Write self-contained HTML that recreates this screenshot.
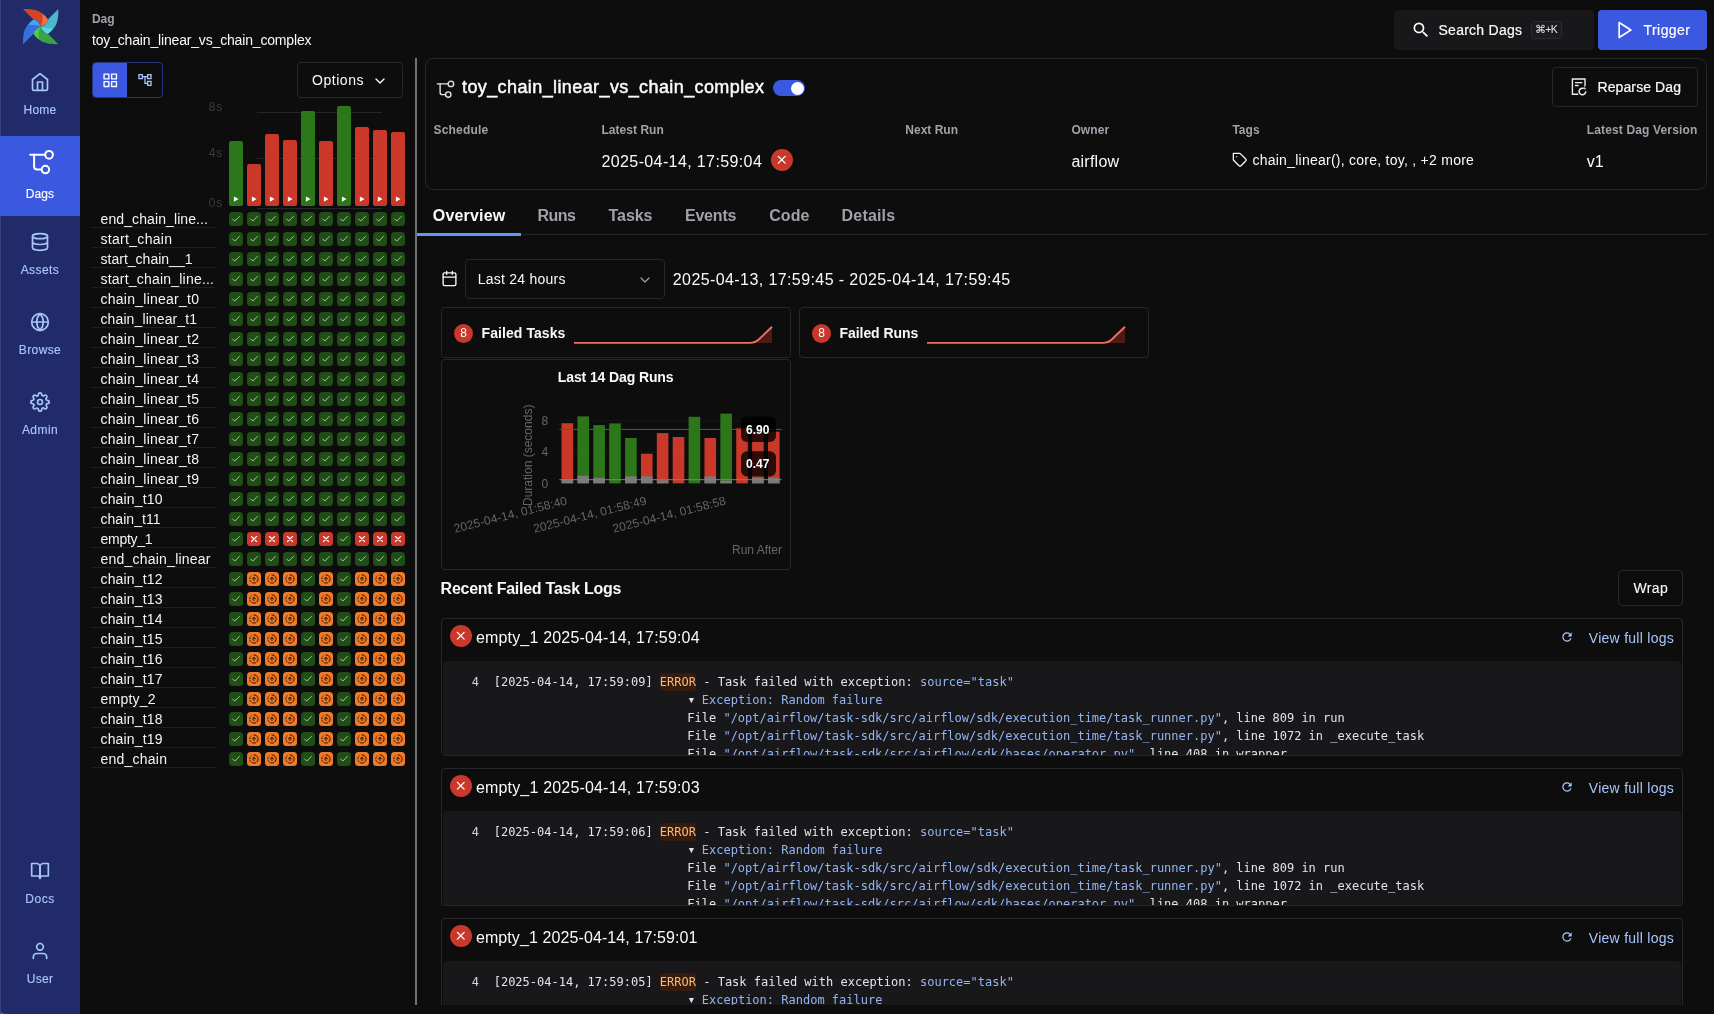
<!DOCTYPE html>
<html lang="en">
<head>
<meta charset="utf-8">
<title>toy_chain_linear_vs_chain_complex - Airflow</title>
<style>

*{box-sizing:border-box;margin:0;padding:0}
html,body{width:1714px;height:1014px;overflow:hidden;background:#0d0d0d}
body{position:relative;will-change:transform;font-family:"Liberation Sans",sans-serif;color:#fafafa;font-size:14px;line-height:20px;-webkit-font-smoothing:antialiased}
.abs{position:absolute}
svg{display:block}
span{white-space:nowrap}
/* sidebar */
#nav{position:absolute;left:0;top:0;width:80px;height:1014px;background:#212b69;border-bottom-left-radius:5px}
#corner{position:absolute;left:0;top:1004px;width:10px;height:10px;background:#6b6a4a}
#nav .edge{position:absolute;left:0;top:0;width:1px;height:1014px;background:#3a4279}
.ni{position:absolute;left:0;width:80px;height:80px;color:#a9c6fb;text-align:center}
.ni.on{background:#3b58e0;color:#fff}
.ni.on .lb{top:48px}
.ni svg{position:absolute;left:30px;top:16px}
.ni .lb{-webkit-text-stroke:.15px currentColor;position:absolute;left:0;width:80px;top:44px;font-size:12px;line-height:20px;text-align:center;display:block}
/* top bar */
.k{color:#a1a1aa}
.btn{position:absolute;border-radius:4px;display:block}
.card{position:absolute;border:1px solid #27272a;border-radius:8px}
.lbl{position:absolute;font-size:12px;line-height:16px;font-weight:bold;color:#a1a1aa}
.tab{position:absolute;top:206px;font-size:16px;line-height:20px;font-weight:bold;color:#a1a1aa}
/* grid */
.tn{position:absolute;left:92px;width:123px;height:20px;border-bottom:1px solid #1f1f22;font-size:14px;line-height:22px;padding-left:8.5px;color:#f4f4f5}
.c{position:absolute;width:14px;height:14px;border-radius:3.5px}
.c.s{background:#1f4e16}
.c.f{background:#c93a2b}
.c.u{background:#ee7f22}
.c svg{position:absolute;left:2px;top:2px}
/* logs */
.lc{position:absolute;left:441px;width:1242px;border:1px solid #27272a;border-radius:4px;overflow:hidden}
.lc .code{position:absolute;left:.6px;top:42px;width:1238.6px;height:94px;background:#18181b;border-radius:4px 4px 0 0;overflow:hidden}
.mono{font-family:"DejaVu Sans Mono","Liberation Mono",monospace;font-size:12px;line-height:18px;white-space:pre;position:absolute;color:#e4e4e7}
.mono .b{color:#93b4f3}
.mono .e{color:#fdba74;background:#371b0c;border-radius:3px;padding:1.75px 0 2.75px}

</style>
</head>
<body>
<div id="corner"></div><nav id="nav"><div class="edge"></div><svg class="abs" style="left:20px;top:6px" width="42" height="42" viewBox="-21 -21 42 42" stroke="none" fill="none"><g transform="translate(-0.3,-0.4)"><g transform="rotate(0)"><path d="M-17.7,-17.6 C-11,-17.8 -4,-17.5 1,-13.5 C4,-11 6,-9 7.4,-6.8 C6.5,-4 4,-1.5 0,0 C-0.5,-3 -3,-6.5 -7.7,-7.7 Z" fill="#d04526"/><path d="M1.8,-12.8 C4,-11 6,-9 7.4,-6.8 C6.5,-4 4,-1.5 0,0 C1.6,-3 2.3,-8 1.8,-12.8 Z" fill="#ee7148"/></g><g transform="rotate(90)"><path d="M-17.7,-17.6 C-11,-17.8 -4,-17.5 1,-13.5 C4,-11 6,-9 7.4,-6.8 C6.5,-4 4,-1.5 0,0 C-0.5,-3 -3,-6.5 -7.7,-7.7 Z" fill="#4bb8c6"/><path d="M1.8,-12.8 C4,-11 6,-9 7.4,-6.8 C6.5,-4 4,-1.5 0,0 C1.6,-3 2.3,-8 1.8,-12.8 Z" fill="#56d6e6"/></g><g transform="rotate(180)"><path d="M-17.7,-17.6 C-11,-17.8 -4,-17.5 1,-13.5 C4,-11 6,-9 7.4,-6.8 C6.5,-4 4,-1.5 0,0 C-0.5,-3 -3,-6.5 -7.7,-7.7 Z" fill="#3da243"/><path d="M1.8,-12.8 C4,-11 6,-9 7.4,-6.8 C6.5,-4 4,-1.5 0,0 C1.6,-3 2.3,-8 1.8,-12.8 Z" fill="#4fc556"/></g><g transform="rotate(270)"><path d="M-17.7,-17.6 C-11,-17.8 -4,-17.5 1,-13.5 C4,-11 6,-9 7.4,-6.8 C6.5,-4 4,-1.5 0,0 C-0.5,-3 -3,-6.5 -7.7,-7.7 Z" fill="#386fe0"/><path d="M1.8,-12.8 C4,-11 6,-9 7.4,-6.8 C6.5,-4 4,-1.5 0,0 C1.6,-3 2.3,-8 1.8,-12.8 Z" fill="#43a3f3"/></g></g></svg><a class="ni" style="top:56px"><svg width="20" height="20" viewBox="0 0 24 24" fill="none" stroke="currentColor" stroke-width="2" stroke-linecap="round" stroke-linejoin="round"><path d="M3 9l9-7 9 7v11a2 2 0 0 1-2 2H5a2 2 0 0 1-2-2z"/><polyline points="9 22 9 12 15 12 15 22"/></svg><span class="lb" style="letter-spacing:0.195px;">Home</span></a><a class="ni on" style="top:136px"><svg width="28" height="28" viewBox="0 0 28 28" fill="none" stroke="currentColor" stroke-width="2" stroke-linecap="round" stroke-linejoin="round" style="left:27px;top:12px"><path d="M3.2 6.8H18.2"/><circle cx="22.05" cy="6.8" r="3.85"/><path d="M7.1 6.8V18.6a3 3 0 0 0 3 3H14.6"/><circle cx="18.4" cy="21.6" r="3.75"/></svg><span class="lb" style="letter-spacing:0.061px;">Dags</span></a><a class="ni" style="top:216px"><svg width="20" height="20" viewBox="0 0 24 24" fill="none" stroke="currentColor" stroke-width="2" stroke-linecap="round" stroke-linejoin="round"><ellipse cx="12" cy="5" rx="9" ry="3"/><path d="M21 12c0 1.66-4 3-9 3s-9-1.34-9-3"/><path d="M3 5v14c0 1.66 4 3 9 3s9-1.34 9-3V5"/></svg><span class="lb" style="letter-spacing:0.437px;">Assets</span></a><a class="ni" style="top:296px"><svg width="20" height="20" viewBox="0 0 24 24" fill="none" stroke="currentColor" stroke-width="2" stroke-linecap="round" stroke-linejoin="round"><circle cx="12" cy="12" r="10"/><line x1="2" y1="12" x2="22" y2="12"/><path d="M12 2a15.3 15.3 0 0 1 4 10 15.3 15.3 0 0 1-4 10 15.3 15.3 0 0 1-4-10 15.3 15.3 0 0 1 4-10z"/></svg><span class="lb" style="letter-spacing:0.397px;">Browse</span></a><a class="ni" style="top:376px"><svg width="20" height="20" viewBox="0 0 24 24" fill="none" stroke="currentColor" stroke-width="2" stroke-linecap="round" stroke-linejoin="round"><circle cx="12" cy="12" r="3"/><path d="M19.4 15a1.65 1.65 0 0 0 .33 1.82l.06.06a2 2 0 0 1 0 2.83 2 2 0 0 1-2.83 0l-.06-.06a1.65 1.65 0 0 0-1.82-.33 1.65 1.65 0 0 0-1 1.51V21a2 2 0 0 1-2 2 2 2 0 0 1-2-2v-.09A1.65 1.65 0 0 0 9 19.4a1.65 1.65 0 0 0-1.82.33l-.06.06a2 2 0 0 1-2.83 0 2 2 0 0 1 0-2.83l.06-.06a1.65 1.65 0 0 0 .33-1.82 1.65 1.65 0 0 0-1.51-1H3a2 2 0 0 1-2-2 2 2 0 0 1 2-2h.09A1.65 1.65 0 0 0 4.6 9a1.65 1.65 0 0 0-.33-1.82l-.06-.06a2 2 0 0 1 0-2.83 2 2 0 0 1 2.83 0l.06.06a1.65 1.65 0 0 0 1.82.33H9a1.65 1.65 0 0 0 1-1.51V3a2 2 0 0 1 2-2 2 2 0 0 1 2 2v.09a1.65 1.65 0 0 0 1 1.51 1.65 1.65 0 0 0 1.82-.33l.06-.06a2 2 0 0 1 2.83 0 2 2 0 0 1 0 2.83l-.06.06a1.65 1.65 0 0 0-.33 1.82V9a1.65 1.65 0 0 0 1.51 1H21a2 2 0 0 1 2 2 2 2 0 0 1-2 2h-.09a1.65 1.65 0 0 0-1.51 1z"/></svg><span class="lb" style="letter-spacing:0.446px;">Admin</span></a><a class="ni" style="top:845px"><svg width="20" height="20" viewBox="0 0 24 24" fill="none" stroke="currentColor" stroke-width="2" stroke-linecap="round" stroke-linejoin="round"><path d="M2 3h6a4 4 0 0 1 4 4v14a3 3 0 0 0-3-3H2z"/><path d="M22 3h-6a4 4 0 0 0-4 4v14a3 3 0 0 1 3-3h7z"/></svg><span class="lb" style="letter-spacing:0.519px;">Docs</span></a><a class="ni" style="top:925px"><svg width="20" height="20" viewBox="0 0 24 24" fill="none" stroke="currentColor" stroke-width="2" stroke-linecap="round" stroke-linejoin="round"><path d="M20 21v-2a4 4 0 0 0-4-4H8a4 4 0 0 0-4 4v2"/><circle cx="12" cy="7" r="4"/></svg><span class="lb" style="letter-spacing:0.352px;">User</span></a></nav>
<div class="abs" style="left:92px;top:11px;font-size:12px;line-height:16px;font-weight:bold;color:#a1a1aa"><span style="letter-spacing:-0.086px;">Dag</span></div><div class="abs" style="left:92px;top:30px;font-size:14px;line-height:20px"><span style="letter-spacing:-0.169px;">toy_chain_linear_vs_chain_complex</span></div><div class="btn" style="left:1394px;top:10px;width:200px;height:40px;background:#18181b"><svg class="abs" style="left:17px;top:10px" width="20" height="20" viewBox="0 0 24 24" fill="#fafafa"><path d="M15.5 14h-.79l-.28-.27A6.471 6.471 0 0 0 16 9.500 6.500 6.500 0 1 0 9.500 16c1.610 0 3.090-.590 4.230-1.570l.27.280v.790l5 4.990L20.490 19l-4.990-5zm-6 0C7.010 14 5 11.990 5 9.500S7.010 5 9.500 5 14 7.010 14 9.500 11.990 14 9.500 14z"/></svg><div class="abs" style="left:44.5px;top:10px;font-size:14px;line-height:20px;-webkit-text-stroke:0.2px #fafafa"><span style="letter-spacing:0.256px;">Search Dags</span></div><div class="abs" style="left:136.5px;top:11px;width:31px;height:17.5px;border:1px solid #2b2b2f;border-radius:4px;background:#1c1c1f;font-size:10.5px;line-height:15px;color:#e4e4e7;text-align:center"><span style="letter-spacing:-0.455px;">&#8984;+K</span></div></div><div class="btn" style="left:1598px;top:10px;width:109px;height:40px;background:#3b58e0"><svg width="20" height="20" viewBox="0 0 24 24" fill="none" stroke="#fff" stroke-width="2" stroke-linecap="round" stroke-linejoin="round" style="position:absolute;left:16.5px;top:10px"><polygon points="5 3 19 12 5 21 5 3"/></svg><div class="abs" style="left:45.5px;top:10px;font-size:14px;line-height:20px;color:#fff;-webkit-text-stroke:0.2px #fff"><span style="letter-spacing:0.445px;">Trigger</span></div></div>
<div class="abs" style="left:92px;top:62px;width:71px;height:36px;border:1px solid #26347f;border-radius:4px;overflow:hidden"><div class="abs" style="left:-1px;top:-1px;width:34.8px;height:36px;background:#3b58e0"></div><svg width="16.5" height="16.5" viewBox="0 0 24 24" fill="none" stroke="#fff" stroke-width="2" stroke-linecap="round" stroke-linejoin="round" style="position:absolute;left:8.5px;top:9.3px"><rect x="3" y="3" width="7" height="7"/><rect x="14" y="3" width="7" height="7"/><rect x="14" y="14" width="7" height="7"/><rect x="3" y="14" width="7" height="7"/></svg><svg class="abs" style="left:44px;top:9px" width="16" height="16" viewBox="0 0 24 24" fill="#a9c6fb"><path d="M22 11V3h-7v3H9V3H2v8h7V8h2v10h4v3h7v-8h-7v3h-2V8h2v3h7zM7 9H4V5h3v4zm10 6h3v4h-3v-4zm0-10h3v4h-3V5z"/></svg></div><div class="abs" style="left:297px;top:62px;width:106px;height:36px;border:1px solid #27272a;border-radius:4px"><div class="abs" style="left:14px;top:7px;font-size:14px;line-height:20px;"><span style="letter-spacing:0.542px;">Options</span></div><svg width="16" height="16" viewBox="0 0 24 24" fill="none" stroke="#fafafa" stroke-width="2" stroke-linecap="round" stroke-linejoin="round" style="position:absolute;left:74px;top:9.5px"><polyline points="6 9 12 15 18 9"/></svg></div><div class="abs" style="left:208.8px;top:98.7px;font-size:12px;line-height:16px;color:#3c3c42"><span style="letter-spacing:0.812px;">8s</span></div><div class="abs" style="left:208.8px;top:145.0px;font-size:12px;line-height:16px;color:#3c3c42"><span style="letter-spacing:0.812px;">4s</span></div><div class="abs" style="left:208.8px;top:195.0px;font-size:12px;line-height:16px;color:#3c3c42"><span style="letter-spacing:0.812px;">0s</span></div><div class="abs" style="left:257px;top:112px;width:125px;height:1px;background:#26262a"></div><div class="abs" style="left:257px;top:158px;width:125px;height:1px;background:#26262a"></div><div class="abs" style="left:257px;top:208px;width:125px;height:1px;background:#26262a"></div><svg class="abs" style="left:229px;top:100px" width="180" height="108" viewBox="0 0 180 108" stroke="none"><rect x="0" y="41" width="14" height="65" rx="2" fill="#2d771b"/><path d="M4.9 96.4v5.4l4.7-2.7z" fill="#fff"/><rect x="18" y="64" width="14" height="42" rx="2" fill="#c93829"/><path d="M22.9 96.4v5.4l4.7-2.7z" fill="#fff"/><rect x="36" y="34" width="14" height="72" rx="2" fill="#c93829"/><path d="M40.9 96.4v5.4l4.7-2.7z" fill="#fff"/><rect x="54" y="40" width="14" height="66" rx="2" fill="#c93829"/><path d="M58.9 96.4v5.4l4.7-2.7z" fill="#fff"/><rect x="72" y="11" width="14" height="95" rx="2" fill="#2d771b"/><path d="M76.9 96.4v5.4l4.7-2.7z" fill="#fff"/><rect x="90" y="41" width="14" height="65" rx="2" fill="#c93829"/><path d="M94.9 96.4v5.4l4.7-2.7z" fill="#fff"/><rect x="108" y="6" width="14" height="100" rx="2" fill="#2d771b"/><path d="M112.9 96.4v5.4l4.7-2.7z" fill="#fff"/><rect x="126" y="27" width="14" height="79" rx="2" fill="#c93829"/><path d="M130.9 96.4v5.4l4.7-2.7z" fill="#fff"/><rect x="144" y="30" width="14" height="76" rx="2" fill="#c93829"/><path d="M148.9 96.4v5.4l4.7-2.7z" fill="#fff"/><rect x="162" y="32" width="14" height="74" rx="2" fill="#c93829"/><path d="M166.9 96.4v5.4l4.7-2.7z" fill="#fff"/></svg><div class="tn" style="top:208px"><span style="letter-spacing:0.102px;">end_chain_line...</span></div><div class="tn" style="top:228px"><span style="letter-spacing:0.302px;">start_chain</span></div><div class="tn" style="top:248px"><span style="letter-spacing:0.012px;">start_chain__1</span></div><div class="tn" style="top:268px"><span style="letter-spacing:0.209px;">start_chain_line...</span></div><div class="tn" style="top:288px"><span style="letter-spacing:0.252px;">chain_linear_t0</span></div><div class="tn" style="top:308px"><span style="letter-spacing:0.109px;">chain_linear_t1</span></div><div class="tn" style="top:328px"><span style="letter-spacing:0.252px;">chain_linear_t2</span></div><div class="tn" style="top:348px"><span style="letter-spacing:0.252px;">chain_linear_t3</span></div><div class="tn" style="top:368px"><span style="letter-spacing:0.252px;">chain_linear_t4</span></div><div class="tn" style="top:388px"><span style="letter-spacing:0.252px;">chain_linear_t5</span></div><div class="tn" style="top:408px"><span style="letter-spacing:0.252px;">chain_linear_t6</span></div><div class="tn" style="top:428px"><span style="letter-spacing:0.252px;">chain_linear_t7</span></div><div class="tn" style="top:448px"><span style="letter-spacing:0.252px;">chain_linear_t8</span></div><div class="tn" style="top:468px"><span style="letter-spacing:0.252px;">chain_linear_t9</span></div><div class="tn" style="top:488px"><span style="letter-spacing:0.160px;">chain_t10</span></div><div class="tn" style="top:508px"><span style="letter-spacing:0.039px;">chain_t11</span></div><div class="tn" style="top:528px"><span style="letter-spacing:-0.284px;">empty_1</span></div><div class="tn" style="top:548px"><span style="letter-spacing:0.224px;">end_chain_linear</span></div><div class="tn" style="top:568px"><span style="letter-spacing:0.160px;">chain_t12</span></div><div class="tn" style="top:588px"><span style="letter-spacing:0.160px;">chain_t13</span></div><div class="tn" style="top:608px"><span style="letter-spacing:0.160px;">chain_t14</span></div><div class="tn" style="top:628px"><span style="letter-spacing:0.160px;">chain_t15</span></div><div class="tn" style="top:648px"><span style="letter-spacing:0.160px;">chain_t16</span></div><div class="tn" style="top:668px"><span style="letter-spacing:0.160px;">chain_t17</span></div><div class="tn" style="top:688px"><span style="letter-spacing:0.216px;">empty_2</span></div><div class="tn" style="top:708px"><span style="letter-spacing:0.160px;">chain_t18</span></div><div class="tn" style="top:728px"><span style="letter-spacing:0.160px;">chain_t19</span></div><div class="tn" style="top:748px"><span style="letter-spacing:0.234px;">end_chain</span></div><svg class="abs" style="left:229px;top:208px" width="180" height="560" viewBox="0 0 180 560" fill="none" stroke-linecap="round" stroke-linejoin="round"><rect x="0" y="4" width="14" height="14" rx="3.5" fill="#1f4e16"/><path d="M3.67 11.00l2.08 2.08 4.59-4.58" stroke="#e4efe2" stroke-opacity=".8" stroke-width=".9"/><rect x="18" y="4" width="14" height="14" rx="3.5" fill="#1f4e16"/><path d="M21.67 11.00l2.08 2.08 4.59-4.58" stroke="#e4efe2" stroke-opacity=".8" stroke-width=".9"/><rect x="36" y="4" width="14" height="14" rx="3.5" fill="#1f4e16"/><path d="M39.67 11.00l2.08 2.08 4.59-4.58" stroke="#e4efe2" stroke-opacity=".8" stroke-width=".9"/><rect x="54" y="4" width="14" height="14" rx="3.5" fill="#1f4e16"/><path d="M57.67 11.00l2.08 2.08 4.59-4.58" stroke="#e4efe2" stroke-opacity=".8" stroke-width=".9"/><rect x="72" y="4" width="14" height="14" rx="3.5" fill="#1f4e16"/><path d="M75.67 11.00l2.08 2.08 4.59-4.58" stroke="#e4efe2" stroke-opacity=".8" stroke-width=".9"/><rect x="90" y="4" width="14" height="14" rx="3.5" fill="#1f4e16"/><path d="M93.67 11.00l2.08 2.08 4.59-4.58" stroke="#e4efe2" stroke-opacity=".8" stroke-width=".9"/><rect x="108" y="4" width="14" height="14" rx="3.5" fill="#1f4e16"/><path d="M111.67 11.00l2.08 2.08 4.59-4.58" stroke="#e4efe2" stroke-opacity=".8" stroke-width=".9"/><rect x="126" y="4" width="14" height="14" rx="3.5" fill="#1f4e16"/><path d="M129.67 11.00l2.08 2.08 4.59-4.58" stroke="#e4efe2" stroke-opacity=".8" stroke-width=".9"/><rect x="144" y="4" width="14" height="14" rx="3.5" fill="#1f4e16"/><path d="M147.67 11.00l2.08 2.08 4.59-4.58" stroke="#e4efe2" stroke-opacity=".8" stroke-width=".9"/><rect x="162" y="4" width="14" height="14" rx="3.5" fill="#1f4e16"/><path d="M165.67 11.00l2.08 2.08 4.59-4.58" stroke="#e4efe2" stroke-opacity=".8" stroke-width=".9"/><rect x="0" y="24" width="14" height="14" rx="3.5" fill="#1f4e16"/><path d="M3.67 31.00l2.08 2.08 4.59-4.58" stroke="#e4efe2" stroke-opacity=".8" stroke-width=".9"/><rect x="18" y="24" width="14" height="14" rx="3.5" fill="#1f4e16"/><path d="M21.67 31.00l2.08 2.08 4.59-4.58" stroke="#e4efe2" stroke-opacity=".8" stroke-width=".9"/><rect x="36" y="24" width="14" height="14" rx="3.5" fill="#1f4e16"/><path d="M39.67 31.00l2.08 2.08 4.59-4.58" stroke="#e4efe2" stroke-opacity=".8" stroke-width=".9"/><rect x="54" y="24" width="14" height="14" rx="3.5" fill="#1f4e16"/><path d="M57.67 31.00l2.08 2.08 4.59-4.58" stroke="#e4efe2" stroke-opacity=".8" stroke-width=".9"/><rect x="72" y="24" width="14" height="14" rx="3.5" fill="#1f4e16"/><path d="M75.67 31.00l2.08 2.08 4.59-4.58" stroke="#e4efe2" stroke-opacity=".8" stroke-width=".9"/><rect x="90" y="24" width="14" height="14" rx="3.5" fill="#1f4e16"/><path d="M93.67 31.00l2.08 2.08 4.59-4.58" stroke="#e4efe2" stroke-opacity=".8" stroke-width=".9"/><rect x="108" y="24" width="14" height="14" rx="3.5" fill="#1f4e16"/><path d="M111.67 31.00l2.08 2.08 4.59-4.58" stroke="#e4efe2" stroke-opacity=".8" stroke-width=".9"/><rect x="126" y="24" width="14" height="14" rx="3.5" fill="#1f4e16"/><path d="M129.67 31.00l2.08 2.08 4.59-4.58" stroke="#e4efe2" stroke-opacity=".8" stroke-width=".9"/><rect x="144" y="24" width="14" height="14" rx="3.5" fill="#1f4e16"/><path d="M147.67 31.00l2.08 2.08 4.59-4.58" stroke="#e4efe2" stroke-opacity=".8" stroke-width=".9"/><rect x="162" y="24" width="14" height="14" rx="3.5" fill="#1f4e16"/><path d="M165.67 31.00l2.08 2.08 4.59-4.58" stroke="#e4efe2" stroke-opacity=".8" stroke-width=".9"/><rect x="0" y="44" width="14" height="14" rx="3.5" fill="#1f4e16"/><path d="M3.67 51.00l2.08 2.08 4.59-4.58" stroke="#e4efe2" stroke-opacity=".8" stroke-width=".9"/><rect x="18" y="44" width="14" height="14" rx="3.5" fill="#1f4e16"/><path d="M21.67 51.00l2.08 2.08 4.59-4.58" stroke="#e4efe2" stroke-opacity=".8" stroke-width=".9"/><rect x="36" y="44" width="14" height="14" rx="3.5" fill="#1f4e16"/><path d="M39.67 51.00l2.08 2.08 4.59-4.58" stroke="#e4efe2" stroke-opacity=".8" stroke-width=".9"/><rect x="54" y="44" width="14" height="14" rx="3.5" fill="#1f4e16"/><path d="M57.67 51.00l2.08 2.08 4.59-4.58" stroke="#e4efe2" stroke-opacity=".8" stroke-width=".9"/><rect x="72" y="44" width="14" height="14" rx="3.5" fill="#1f4e16"/><path d="M75.67 51.00l2.08 2.08 4.59-4.58" stroke="#e4efe2" stroke-opacity=".8" stroke-width=".9"/><rect x="90" y="44" width="14" height="14" rx="3.5" fill="#1f4e16"/><path d="M93.67 51.00l2.08 2.08 4.59-4.58" stroke="#e4efe2" stroke-opacity=".8" stroke-width=".9"/><rect x="108" y="44" width="14" height="14" rx="3.5" fill="#1f4e16"/><path d="M111.67 51.00l2.08 2.08 4.59-4.58" stroke="#e4efe2" stroke-opacity=".8" stroke-width=".9"/><rect x="126" y="44" width="14" height="14" rx="3.5" fill="#1f4e16"/><path d="M129.67 51.00l2.08 2.08 4.59-4.58" stroke="#e4efe2" stroke-opacity=".8" stroke-width=".9"/><rect x="144" y="44" width="14" height="14" rx="3.5" fill="#1f4e16"/><path d="M147.67 51.00l2.08 2.08 4.59-4.58" stroke="#e4efe2" stroke-opacity=".8" stroke-width=".9"/><rect x="162" y="44" width="14" height="14" rx="3.5" fill="#1f4e16"/><path d="M165.67 51.00l2.08 2.08 4.59-4.58" stroke="#e4efe2" stroke-opacity=".8" stroke-width=".9"/><rect x="0" y="64" width="14" height="14" rx="3.5" fill="#1f4e16"/><path d="M3.67 71.00l2.08 2.08 4.59-4.58" stroke="#e4efe2" stroke-opacity=".8" stroke-width=".9"/><rect x="18" y="64" width="14" height="14" rx="3.5" fill="#1f4e16"/><path d="M21.67 71.00l2.08 2.08 4.59-4.58" stroke="#e4efe2" stroke-opacity=".8" stroke-width=".9"/><rect x="36" y="64" width="14" height="14" rx="3.5" fill="#1f4e16"/><path d="M39.67 71.00l2.08 2.08 4.59-4.58" stroke="#e4efe2" stroke-opacity=".8" stroke-width=".9"/><rect x="54" y="64" width="14" height="14" rx="3.5" fill="#1f4e16"/><path d="M57.67 71.00l2.08 2.08 4.59-4.58" stroke="#e4efe2" stroke-opacity=".8" stroke-width=".9"/><rect x="72" y="64" width="14" height="14" rx="3.5" fill="#1f4e16"/><path d="M75.67 71.00l2.08 2.08 4.59-4.58" stroke="#e4efe2" stroke-opacity=".8" stroke-width=".9"/><rect x="90" y="64" width="14" height="14" rx="3.5" fill="#1f4e16"/><path d="M93.67 71.00l2.08 2.08 4.59-4.58" stroke="#e4efe2" stroke-opacity=".8" stroke-width=".9"/><rect x="108" y="64" width="14" height="14" rx="3.5" fill="#1f4e16"/><path d="M111.67 71.00l2.08 2.08 4.59-4.58" stroke="#e4efe2" stroke-opacity=".8" stroke-width=".9"/><rect x="126" y="64" width="14" height="14" rx="3.5" fill="#1f4e16"/><path d="M129.67 71.00l2.08 2.08 4.59-4.58" stroke="#e4efe2" stroke-opacity=".8" stroke-width=".9"/><rect x="144" y="64" width="14" height="14" rx="3.5" fill="#1f4e16"/><path d="M147.67 71.00l2.08 2.08 4.59-4.58" stroke="#e4efe2" stroke-opacity=".8" stroke-width=".9"/><rect x="162" y="64" width="14" height="14" rx="3.5" fill="#1f4e16"/><path d="M165.67 71.00l2.08 2.08 4.59-4.58" stroke="#e4efe2" stroke-opacity=".8" stroke-width=".9"/><rect x="0" y="84" width="14" height="14" rx="3.5" fill="#1f4e16"/><path d="M3.67 91.00l2.08 2.08 4.59-4.58" stroke="#e4efe2" stroke-opacity=".8" stroke-width=".9"/><rect x="18" y="84" width="14" height="14" rx="3.5" fill="#1f4e16"/><path d="M21.67 91.00l2.08 2.08 4.59-4.58" stroke="#e4efe2" stroke-opacity=".8" stroke-width=".9"/><rect x="36" y="84" width="14" height="14" rx="3.5" fill="#1f4e16"/><path d="M39.67 91.00l2.08 2.08 4.59-4.58" stroke="#e4efe2" stroke-opacity=".8" stroke-width=".9"/><rect x="54" y="84" width="14" height="14" rx="3.5" fill="#1f4e16"/><path d="M57.67 91.00l2.08 2.08 4.59-4.58" stroke="#e4efe2" stroke-opacity=".8" stroke-width=".9"/><rect x="72" y="84" width="14" height="14" rx="3.5" fill="#1f4e16"/><path d="M75.67 91.00l2.08 2.08 4.59-4.58" stroke="#e4efe2" stroke-opacity=".8" stroke-width=".9"/><rect x="90" y="84" width="14" height="14" rx="3.5" fill="#1f4e16"/><path d="M93.67 91.00l2.08 2.08 4.59-4.58" stroke="#e4efe2" stroke-opacity=".8" stroke-width=".9"/><rect x="108" y="84" width="14" height="14" rx="3.5" fill="#1f4e16"/><path d="M111.67 91.00l2.08 2.08 4.59-4.58" stroke="#e4efe2" stroke-opacity=".8" stroke-width=".9"/><rect x="126" y="84" width="14" height="14" rx="3.5" fill="#1f4e16"/><path d="M129.67 91.00l2.08 2.08 4.59-4.58" stroke="#e4efe2" stroke-opacity=".8" stroke-width=".9"/><rect x="144" y="84" width="14" height="14" rx="3.5" fill="#1f4e16"/><path d="M147.67 91.00l2.08 2.08 4.59-4.58" stroke="#e4efe2" stroke-opacity=".8" stroke-width=".9"/><rect x="162" y="84" width="14" height="14" rx="3.5" fill="#1f4e16"/><path d="M165.67 91.00l2.08 2.08 4.59-4.58" stroke="#e4efe2" stroke-opacity=".8" stroke-width=".9"/><rect x="0" y="104" width="14" height="14" rx="3.5" fill="#1f4e16"/><path d="M3.67 111.00l2.08 2.08 4.59-4.58" stroke="#e4efe2" stroke-opacity=".8" stroke-width=".9"/><rect x="18" y="104" width="14" height="14" rx="3.5" fill="#1f4e16"/><path d="M21.67 111.00l2.08 2.08 4.59-4.58" stroke="#e4efe2" stroke-opacity=".8" stroke-width=".9"/><rect x="36" y="104" width="14" height="14" rx="3.5" fill="#1f4e16"/><path d="M39.67 111.00l2.08 2.08 4.59-4.58" stroke="#e4efe2" stroke-opacity=".8" stroke-width=".9"/><rect x="54" y="104" width="14" height="14" rx="3.5" fill="#1f4e16"/><path d="M57.67 111.00l2.08 2.08 4.59-4.58" stroke="#e4efe2" stroke-opacity=".8" stroke-width=".9"/><rect x="72" y="104" width="14" height="14" rx="3.5" fill="#1f4e16"/><path d="M75.67 111.00l2.08 2.08 4.59-4.58" stroke="#e4efe2" stroke-opacity=".8" stroke-width=".9"/><rect x="90" y="104" width="14" height="14" rx="3.5" fill="#1f4e16"/><path d="M93.67 111.00l2.08 2.08 4.59-4.58" stroke="#e4efe2" stroke-opacity=".8" stroke-width=".9"/><rect x="108" y="104" width="14" height="14" rx="3.5" fill="#1f4e16"/><path d="M111.67 111.00l2.08 2.08 4.59-4.58" stroke="#e4efe2" stroke-opacity=".8" stroke-width=".9"/><rect x="126" y="104" width="14" height="14" rx="3.5" fill="#1f4e16"/><path d="M129.67 111.00l2.08 2.08 4.59-4.58" stroke="#e4efe2" stroke-opacity=".8" stroke-width=".9"/><rect x="144" y="104" width="14" height="14" rx="3.5" fill="#1f4e16"/><path d="M147.67 111.00l2.08 2.08 4.59-4.58" stroke="#e4efe2" stroke-opacity=".8" stroke-width=".9"/><rect x="162" y="104" width="14" height="14" rx="3.5" fill="#1f4e16"/><path d="M165.67 111.00l2.08 2.08 4.59-4.58" stroke="#e4efe2" stroke-opacity=".8" stroke-width=".9"/><rect x="0" y="124" width="14" height="14" rx="3.5" fill="#1f4e16"/><path d="M3.67 131.00l2.08 2.08 4.59-4.58" stroke="#e4efe2" stroke-opacity=".8" stroke-width=".9"/><rect x="18" y="124" width="14" height="14" rx="3.5" fill="#1f4e16"/><path d="M21.67 131.00l2.08 2.08 4.59-4.58" stroke="#e4efe2" stroke-opacity=".8" stroke-width=".9"/><rect x="36" y="124" width="14" height="14" rx="3.5" fill="#1f4e16"/><path d="M39.67 131.00l2.08 2.08 4.59-4.58" stroke="#e4efe2" stroke-opacity=".8" stroke-width=".9"/><rect x="54" y="124" width="14" height="14" rx="3.5" fill="#1f4e16"/><path d="M57.67 131.00l2.08 2.08 4.59-4.58" stroke="#e4efe2" stroke-opacity=".8" stroke-width=".9"/><rect x="72" y="124" width="14" height="14" rx="3.5" fill="#1f4e16"/><path d="M75.67 131.00l2.08 2.08 4.59-4.58" stroke="#e4efe2" stroke-opacity=".8" stroke-width=".9"/><rect x="90" y="124" width="14" height="14" rx="3.5" fill="#1f4e16"/><path d="M93.67 131.00l2.08 2.08 4.59-4.58" stroke="#e4efe2" stroke-opacity=".8" stroke-width=".9"/><rect x="108" y="124" width="14" height="14" rx="3.5" fill="#1f4e16"/><path d="M111.67 131.00l2.08 2.08 4.59-4.58" stroke="#e4efe2" stroke-opacity=".8" stroke-width=".9"/><rect x="126" y="124" width="14" height="14" rx="3.5" fill="#1f4e16"/><path d="M129.67 131.00l2.08 2.08 4.59-4.58" stroke="#e4efe2" stroke-opacity=".8" stroke-width=".9"/><rect x="144" y="124" width="14" height="14" rx="3.5" fill="#1f4e16"/><path d="M147.67 131.00l2.08 2.08 4.59-4.58" stroke="#e4efe2" stroke-opacity=".8" stroke-width=".9"/><rect x="162" y="124" width="14" height="14" rx="3.5" fill="#1f4e16"/><path d="M165.67 131.00l2.08 2.08 4.59-4.58" stroke="#e4efe2" stroke-opacity=".8" stroke-width=".9"/><rect x="0" y="144" width="14" height="14" rx="3.5" fill="#1f4e16"/><path d="M3.67 151.00l2.08 2.08 4.59-4.58" stroke="#e4efe2" stroke-opacity=".8" stroke-width=".9"/><rect x="18" y="144" width="14" height="14" rx="3.5" fill="#1f4e16"/><path d="M21.67 151.00l2.08 2.08 4.59-4.58" stroke="#e4efe2" stroke-opacity=".8" stroke-width=".9"/><rect x="36" y="144" width="14" height="14" rx="3.5" fill="#1f4e16"/><path d="M39.67 151.00l2.08 2.08 4.59-4.58" stroke="#e4efe2" stroke-opacity=".8" stroke-width=".9"/><rect x="54" y="144" width="14" height="14" rx="3.5" fill="#1f4e16"/><path d="M57.67 151.00l2.08 2.08 4.59-4.58" stroke="#e4efe2" stroke-opacity=".8" stroke-width=".9"/><rect x="72" y="144" width="14" height="14" rx="3.5" fill="#1f4e16"/><path d="M75.67 151.00l2.08 2.08 4.59-4.58" stroke="#e4efe2" stroke-opacity=".8" stroke-width=".9"/><rect x="90" y="144" width="14" height="14" rx="3.5" fill="#1f4e16"/><path d="M93.67 151.00l2.08 2.08 4.59-4.58" stroke="#e4efe2" stroke-opacity=".8" stroke-width=".9"/><rect x="108" y="144" width="14" height="14" rx="3.5" fill="#1f4e16"/><path d="M111.67 151.00l2.08 2.08 4.59-4.58" stroke="#e4efe2" stroke-opacity=".8" stroke-width=".9"/><rect x="126" y="144" width="14" height="14" rx="3.5" fill="#1f4e16"/><path d="M129.67 151.00l2.08 2.08 4.59-4.58" stroke="#e4efe2" stroke-opacity=".8" stroke-width=".9"/><rect x="144" y="144" width="14" height="14" rx="3.5" fill="#1f4e16"/><path d="M147.67 151.00l2.08 2.08 4.59-4.58" stroke="#e4efe2" stroke-opacity=".8" stroke-width=".9"/><rect x="162" y="144" width="14" height="14" rx="3.5" fill="#1f4e16"/><path d="M165.67 151.00l2.08 2.08 4.59-4.58" stroke="#e4efe2" stroke-opacity=".8" stroke-width=".9"/><rect x="0" y="164" width="14" height="14" rx="3.5" fill="#1f4e16"/><path d="M3.67 171.00l2.08 2.08 4.59-4.58" stroke="#e4efe2" stroke-opacity=".8" stroke-width=".9"/><rect x="18" y="164" width="14" height="14" rx="3.5" fill="#1f4e16"/><path d="M21.67 171.00l2.08 2.08 4.59-4.58" stroke="#e4efe2" stroke-opacity=".8" stroke-width=".9"/><rect x="36" y="164" width="14" height="14" rx="3.5" fill="#1f4e16"/><path d="M39.67 171.00l2.08 2.08 4.59-4.58" stroke="#e4efe2" stroke-opacity=".8" stroke-width=".9"/><rect x="54" y="164" width="14" height="14" rx="3.5" fill="#1f4e16"/><path d="M57.67 171.00l2.08 2.08 4.59-4.58" stroke="#e4efe2" stroke-opacity=".8" stroke-width=".9"/><rect x="72" y="164" width="14" height="14" rx="3.5" fill="#1f4e16"/><path d="M75.67 171.00l2.08 2.08 4.59-4.58" stroke="#e4efe2" stroke-opacity=".8" stroke-width=".9"/><rect x="90" y="164" width="14" height="14" rx="3.5" fill="#1f4e16"/><path d="M93.67 171.00l2.08 2.08 4.59-4.58" stroke="#e4efe2" stroke-opacity=".8" stroke-width=".9"/><rect x="108" y="164" width="14" height="14" rx="3.5" fill="#1f4e16"/><path d="M111.67 171.00l2.08 2.08 4.59-4.58" stroke="#e4efe2" stroke-opacity=".8" stroke-width=".9"/><rect x="126" y="164" width="14" height="14" rx="3.5" fill="#1f4e16"/><path d="M129.67 171.00l2.08 2.08 4.59-4.58" stroke="#e4efe2" stroke-opacity=".8" stroke-width=".9"/><rect x="144" y="164" width="14" height="14" rx="3.5" fill="#1f4e16"/><path d="M147.67 171.00l2.08 2.08 4.59-4.58" stroke="#e4efe2" stroke-opacity=".8" stroke-width=".9"/><rect x="162" y="164" width="14" height="14" rx="3.5" fill="#1f4e16"/><path d="M165.67 171.00l2.08 2.08 4.59-4.58" stroke="#e4efe2" stroke-opacity=".8" stroke-width=".9"/><rect x="0" y="184" width="14" height="14" rx="3.5" fill="#1f4e16"/><path d="M3.67 191.00l2.08 2.08 4.59-4.58" stroke="#e4efe2" stroke-opacity=".8" stroke-width=".9"/><rect x="18" y="184" width="14" height="14" rx="3.5" fill="#1f4e16"/><path d="M21.67 191.00l2.08 2.08 4.59-4.58" stroke="#e4efe2" stroke-opacity=".8" stroke-width=".9"/><rect x="36" y="184" width="14" height="14" rx="3.5" fill="#1f4e16"/><path d="M39.67 191.00l2.08 2.08 4.59-4.58" stroke="#e4efe2" stroke-opacity=".8" stroke-width=".9"/><rect x="54" y="184" width="14" height="14" rx="3.5" fill="#1f4e16"/><path d="M57.67 191.00l2.08 2.08 4.59-4.58" stroke="#e4efe2" stroke-opacity=".8" stroke-width=".9"/><rect x="72" y="184" width="14" height="14" rx="3.5" fill="#1f4e16"/><path d="M75.67 191.00l2.08 2.08 4.59-4.58" stroke="#e4efe2" stroke-opacity=".8" stroke-width=".9"/><rect x="90" y="184" width="14" height="14" rx="3.5" fill="#1f4e16"/><path d="M93.67 191.00l2.08 2.08 4.59-4.58" stroke="#e4efe2" stroke-opacity=".8" stroke-width=".9"/><rect x="108" y="184" width="14" height="14" rx="3.5" fill="#1f4e16"/><path d="M111.67 191.00l2.08 2.08 4.59-4.58" stroke="#e4efe2" stroke-opacity=".8" stroke-width=".9"/><rect x="126" y="184" width="14" height="14" rx="3.5" fill="#1f4e16"/><path d="M129.67 191.00l2.08 2.08 4.59-4.58" stroke="#e4efe2" stroke-opacity=".8" stroke-width=".9"/><rect x="144" y="184" width="14" height="14" rx="3.5" fill="#1f4e16"/><path d="M147.67 191.00l2.08 2.08 4.59-4.58" stroke="#e4efe2" stroke-opacity=".8" stroke-width=".9"/><rect x="162" y="184" width="14" height="14" rx="3.5" fill="#1f4e16"/><path d="M165.67 191.00l2.08 2.08 4.59-4.58" stroke="#e4efe2" stroke-opacity=".8" stroke-width=".9"/><rect x="0" y="204" width="14" height="14" rx="3.5" fill="#1f4e16"/><path d="M3.67 211.00l2.08 2.08 4.59-4.58" stroke="#e4efe2" stroke-opacity=".8" stroke-width=".9"/><rect x="18" y="204" width="14" height="14" rx="3.5" fill="#1f4e16"/><path d="M21.67 211.00l2.08 2.08 4.59-4.58" stroke="#e4efe2" stroke-opacity=".8" stroke-width=".9"/><rect x="36" y="204" width="14" height="14" rx="3.5" fill="#1f4e16"/><path d="M39.67 211.00l2.08 2.08 4.59-4.58" stroke="#e4efe2" stroke-opacity=".8" stroke-width=".9"/><rect x="54" y="204" width="14" height="14" rx="3.5" fill="#1f4e16"/><path d="M57.67 211.00l2.08 2.08 4.59-4.58" stroke="#e4efe2" stroke-opacity=".8" stroke-width=".9"/><rect x="72" y="204" width="14" height="14" rx="3.5" fill="#1f4e16"/><path d="M75.67 211.00l2.08 2.08 4.59-4.58" stroke="#e4efe2" stroke-opacity=".8" stroke-width=".9"/><rect x="90" y="204" width="14" height="14" rx="3.5" fill="#1f4e16"/><path d="M93.67 211.00l2.08 2.08 4.59-4.58" stroke="#e4efe2" stroke-opacity=".8" stroke-width=".9"/><rect x="108" y="204" width="14" height="14" rx="3.5" fill="#1f4e16"/><path d="M111.67 211.00l2.08 2.08 4.59-4.58" stroke="#e4efe2" stroke-opacity=".8" stroke-width=".9"/><rect x="126" y="204" width="14" height="14" rx="3.5" fill="#1f4e16"/><path d="M129.67 211.00l2.08 2.08 4.59-4.58" stroke="#e4efe2" stroke-opacity=".8" stroke-width=".9"/><rect x="144" y="204" width="14" height="14" rx="3.5" fill="#1f4e16"/><path d="M147.67 211.00l2.08 2.08 4.59-4.58" stroke="#e4efe2" stroke-opacity=".8" stroke-width=".9"/><rect x="162" y="204" width="14" height="14" rx="3.5" fill="#1f4e16"/><path d="M165.67 211.00l2.08 2.08 4.59-4.58" stroke="#e4efe2" stroke-opacity=".8" stroke-width=".9"/><rect x="0" y="224" width="14" height="14" rx="3.5" fill="#1f4e16"/><path d="M3.67 231.00l2.08 2.08 4.59-4.58" stroke="#e4efe2" stroke-opacity=".8" stroke-width=".9"/><rect x="18" y="224" width="14" height="14" rx="3.5" fill="#1f4e16"/><path d="M21.67 231.00l2.08 2.08 4.59-4.58" stroke="#e4efe2" stroke-opacity=".8" stroke-width=".9"/><rect x="36" y="224" width="14" height="14" rx="3.5" fill="#1f4e16"/><path d="M39.67 231.00l2.08 2.08 4.59-4.58" stroke="#e4efe2" stroke-opacity=".8" stroke-width=".9"/><rect x="54" y="224" width="14" height="14" rx="3.5" fill="#1f4e16"/><path d="M57.67 231.00l2.08 2.08 4.59-4.58" stroke="#e4efe2" stroke-opacity=".8" stroke-width=".9"/><rect x="72" y="224" width="14" height="14" rx="3.5" fill="#1f4e16"/><path d="M75.67 231.00l2.08 2.08 4.59-4.58" stroke="#e4efe2" stroke-opacity=".8" stroke-width=".9"/><rect x="90" y="224" width="14" height="14" rx="3.5" fill="#1f4e16"/><path d="M93.67 231.00l2.08 2.08 4.59-4.58" stroke="#e4efe2" stroke-opacity=".8" stroke-width=".9"/><rect x="108" y="224" width="14" height="14" rx="3.5" fill="#1f4e16"/><path d="M111.67 231.00l2.08 2.08 4.59-4.58" stroke="#e4efe2" stroke-opacity=".8" stroke-width=".9"/><rect x="126" y="224" width="14" height="14" rx="3.5" fill="#1f4e16"/><path d="M129.67 231.00l2.08 2.08 4.59-4.58" stroke="#e4efe2" stroke-opacity=".8" stroke-width=".9"/><rect x="144" y="224" width="14" height="14" rx="3.5" fill="#1f4e16"/><path d="M147.67 231.00l2.08 2.08 4.59-4.58" stroke="#e4efe2" stroke-opacity=".8" stroke-width=".9"/><rect x="162" y="224" width="14" height="14" rx="3.5" fill="#1f4e16"/><path d="M165.67 231.00l2.08 2.08 4.59-4.58" stroke="#e4efe2" stroke-opacity=".8" stroke-width=".9"/><rect x="0" y="244" width="14" height="14" rx="3.5" fill="#1f4e16"/><path d="M3.67 251.00l2.08 2.08 4.59-4.58" stroke="#e4efe2" stroke-opacity=".8" stroke-width=".9"/><rect x="18" y="244" width="14" height="14" rx="3.5" fill="#1f4e16"/><path d="M21.67 251.00l2.08 2.08 4.59-4.58" stroke="#e4efe2" stroke-opacity=".8" stroke-width=".9"/><rect x="36" y="244" width="14" height="14" rx="3.5" fill="#1f4e16"/><path d="M39.67 251.00l2.08 2.08 4.59-4.58" stroke="#e4efe2" stroke-opacity=".8" stroke-width=".9"/><rect x="54" y="244" width="14" height="14" rx="3.5" fill="#1f4e16"/><path d="M57.67 251.00l2.08 2.08 4.59-4.58" stroke="#e4efe2" stroke-opacity=".8" stroke-width=".9"/><rect x="72" y="244" width="14" height="14" rx="3.5" fill="#1f4e16"/><path d="M75.67 251.00l2.08 2.08 4.59-4.58" stroke="#e4efe2" stroke-opacity=".8" stroke-width=".9"/><rect x="90" y="244" width="14" height="14" rx="3.5" fill="#1f4e16"/><path d="M93.67 251.00l2.08 2.08 4.59-4.58" stroke="#e4efe2" stroke-opacity=".8" stroke-width=".9"/><rect x="108" y="244" width="14" height="14" rx="3.5" fill="#1f4e16"/><path d="M111.67 251.00l2.08 2.08 4.59-4.58" stroke="#e4efe2" stroke-opacity=".8" stroke-width=".9"/><rect x="126" y="244" width="14" height="14" rx="3.5" fill="#1f4e16"/><path d="M129.67 251.00l2.08 2.08 4.59-4.58" stroke="#e4efe2" stroke-opacity=".8" stroke-width=".9"/><rect x="144" y="244" width="14" height="14" rx="3.5" fill="#1f4e16"/><path d="M147.67 251.00l2.08 2.08 4.59-4.58" stroke="#e4efe2" stroke-opacity=".8" stroke-width=".9"/><rect x="162" y="244" width="14" height="14" rx="3.5" fill="#1f4e16"/><path d="M165.67 251.00l2.08 2.08 4.59-4.58" stroke="#e4efe2" stroke-opacity=".8" stroke-width=".9"/><rect x="0" y="264" width="14" height="14" rx="3.5" fill="#1f4e16"/><path d="M3.67 271.00l2.08 2.08 4.59-4.58" stroke="#e4efe2" stroke-opacity=".8" stroke-width=".9"/><rect x="18" y="264" width="14" height="14" rx="3.5" fill="#1f4e16"/><path d="M21.67 271.00l2.08 2.08 4.59-4.58" stroke="#e4efe2" stroke-opacity=".8" stroke-width=".9"/><rect x="36" y="264" width="14" height="14" rx="3.5" fill="#1f4e16"/><path d="M39.67 271.00l2.08 2.08 4.59-4.58" stroke="#e4efe2" stroke-opacity=".8" stroke-width=".9"/><rect x="54" y="264" width="14" height="14" rx="3.5" fill="#1f4e16"/><path d="M57.67 271.00l2.08 2.08 4.59-4.58" stroke="#e4efe2" stroke-opacity=".8" stroke-width=".9"/><rect x="72" y="264" width="14" height="14" rx="3.5" fill="#1f4e16"/><path d="M75.67 271.00l2.08 2.08 4.59-4.58" stroke="#e4efe2" stroke-opacity=".8" stroke-width=".9"/><rect x="90" y="264" width="14" height="14" rx="3.5" fill="#1f4e16"/><path d="M93.67 271.00l2.08 2.08 4.59-4.58" stroke="#e4efe2" stroke-opacity=".8" stroke-width=".9"/><rect x="108" y="264" width="14" height="14" rx="3.5" fill="#1f4e16"/><path d="M111.67 271.00l2.08 2.08 4.59-4.58" stroke="#e4efe2" stroke-opacity=".8" stroke-width=".9"/><rect x="126" y="264" width="14" height="14" rx="3.5" fill="#1f4e16"/><path d="M129.67 271.00l2.08 2.08 4.59-4.58" stroke="#e4efe2" stroke-opacity=".8" stroke-width=".9"/><rect x="144" y="264" width="14" height="14" rx="3.5" fill="#1f4e16"/><path d="M147.67 271.00l2.08 2.08 4.59-4.58" stroke="#e4efe2" stroke-opacity=".8" stroke-width=".9"/><rect x="162" y="264" width="14" height="14" rx="3.5" fill="#1f4e16"/><path d="M165.67 271.00l2.08 2.08 4.59-4.58" stroke="#e4efe2" stroke-opacity=".8" stroke-width=".9"/><rect x="0" y="284" width="14" height="14" rx="3.5" fill="#1f4e16"/><path d="M3.67 291.00l2.08 2.08 4.59-4.58" stroke="#e4efe2" stroke-opacity=".8" stroke-width=".9"/><rect x="18" y="284" width="14" height="14" rx="3.5" fill="#1f4e16"/><path d="M21.67 291.00l2.08 2.08 4.59-4.58" stroke="#e4efe2" stroke-opacity=".8" stroke-width=".9"/><rect x="36" y="284" width="14" height="14" rx="3.5" fill="#1f4e16"/><path d="M39.67 291.00l2.08 2.08 4.59-4.58" stroke="#e4efe2" stroke-opacity=".8" stroke-width=".9"/><rect x="54" y="284" width="14" height="14" rx="3.5" fill="#1f4e16"/><path d="M57.67 291.00l2.08 2.08 4.59-4.58" stroke="#e4efe2" stroke-opacity=".8" stroke-width=".9"/><rect x="72" y="284" width="14" height="14" rx="3.5" fill="#1f4e16"/><path d="M75.67 291.00l2.08 2.08 4.59-4.58" stroke="#e4efe2" stroke-opacity=".8" stroke-width=".9"/><rect x="90" y="284" width="14" height="14" rx="3.5" fill="#1f4e16"/><path d="M93.67 291.00l2.08 2.08 4.59-4.58" stroke="#e4efe2" stroke-opacity=".8" stroke-width=".9"/><rect x="108" y="284" width="14" height="14" rx="3.5" fill="#1f4e16"/><path d="M111.67 291.00l2.08 2.08 4.59-4.58" stroke="#e4efe2" stroke-opacity=".8" stroke-width=".9"/><rect x="126" y="284" width="14" height="14" rx="3.5" fill="#1f4e16"/><path d="M129.67 291.00l2.08 2.08 4.59-4.58" stroke="#e4efe2" stroke-opacity=".8" stroke-width=".9"/><rect x="144" y="284" width="14" height="14" rx="3.5" fill="#1f4e16"/><path d="M147.67 291.00l2.08 2.08 4.59-4.58" stroke="#e4efe2" stroke-opacity=".8" stroke-width=".9"/><rect x="162" y="284" width="14" height="14" rx="3.5" fill="#1f4e16"/><path d="M165.67 291.00l2.08 2.08 4.59-4.58" stroke="#e4efe2" stroke-opacity=".8" stroke-width=".9"/><rect x="0" y="304" width="14" height="14" rx="3.5" fill="#1f4e16"/><path d="M3.67 311.00l2.08 2.08 4.59-4.58" stroke="#e4efe2" stroke-opacity=".8" stroke-width=".9"/><rect x="18" y="304" width="14" height="14" rx="3.5" fill="#1f4e16"/><path d="M21.67 311.00l2.08 2.08 4.59-4.58" stroke="#e4efe2" stroke-opacity=".8" stroke-width=".9"/><rect x="36" y="304" width="14" height="14" rx="3.5" fill="#1f4e16"/><path d="M39.67 311.00l2.08 2.08 4.59-4.58" stroke="#e4efe2" stroke-opacity=".8" stroke-width=".9"/><rect x="54" y="304" width="14" height="14" rx="3.5" fill="#1f4e16"/><path d="M57.67 311.00l2.08 2.08 4.59-4.58" stroke="#e4efe2" stroke-opacity=".8" stroke-width=".9"/><rect x="72" y="304" width="14" height="14" rx="3.5" fill="#1f4e16"/><path d="M75.67 311.00l2.08 2.08 4.59-4.58" stroke="#e4efe2" stroke-opacity=".8" stroke-width=".9"/><rect x="90" y="304" width="14" height="14" rx="3.5" fill="#1f4e16"/><path d="M93.67 311.00l2.08 2.08 4.59-4.58" stroke="#e4efe2" stroke-opacity=".8" stroke-width=".9"/><rect x="108" y="304" width="14" height="14" rx="3.5" fill="#1f4e16"/><path d="M111.67 311.00l2.08 2.08 4.59-4.58" stroke="#e4efe2" stroke-opacity=".8" stroke-width=".9"/><rect x="126" y="304" width="14" height="14" rx="3.5" fill="#1f4e16"/><path d="M129.67 311.00l2.08 2.08 4.59-4.58" stroke="#e4efe2" stroke-opacity=".8" stroke-width=".9"/><rect x="144" y="304" width="14" height="14" rx="3.5" fill="#1f4e16"/><path d="M147.67 311.00l2.08 2.08 4.59-4.58" stroke="#e4efe2" stroke-opacity=".8" stroke-width=".9"/><rect x="162" y="304" width="14" height="14" rx="3.5" fill="#1f4e16"/><path d="M165.67 311.00l2.08 2.08 4.59-4.58" stroke="#e4efe2" stroke-opacity=".8" stroke-width=".9"/><rect x="0" y="324" width="14" height="14" rx="3.5" fill="#1f4e16"/><path d="M3.67 331.00l2.08 2.08 4.59-4.58" stroke="#e4efe2" stroke-opacity=".8" stroke-width=".9"/><rect x="18" y="324" width="14" height="14" rx="3.5" fill="#c93a2b"/><path d="M22.5 328.5l5 5m0-5l-5 5" stroke="#fff" stroke-width="1.150"/><rect x="36" y="324" width="14" height="14" rx="3.5" fill="#c93a2b"/><path d="M40.5 328.5l5 5m0-5l-5 5" stroke="#fff" stroke-width="1.150"/><rect x="54" y="324" width="14" height="14" rx="3.5" fill="#c93a2b"/><path d="M58.5 328.5l5 5m0-5l-5 5" stroke="#fff" stroke-width="1.150"/><rect x="72" y="324" width="14" height="14" rx="3.5" fill="#1f4e16"/><path d="M75.67 331.00l2.08 2.08 4.59-4.58" stroke="#e4efe2" stroke-opacity=".8" stroke-width=".9"/><rect x="90" y="324" width="14" height="14" rx="3.5" fill="#c93a2b"/><path d="M94.5 328.5l5 5m0-5l-5 5" stroke="#fff" stroke-width="1.150"/><rect x="108" y="324" width="14" height="14" rx="3.5" fill="#1f4e16"/><path d="M111.67 331.00l2.08 2.08 4.59-4.58" stroke="#e4efe2" stroke-opacity=".8" stroke-width=".9"/><rect x="126" y="324" width="14" height="14" rx="3.5" fill="#c93a2b"/><path d="M130.5 328.5l5 5m0-5l-5 5" stroke="#fff" stroke-width="1.150"/><rect x="144" y="324" width="14" height="14" rx="3.5" fill="#c93a2b"/><path d="M148.5 328.5l5 5m0-5l-5 5" stroke="#fff" stroke-width="1.150"/><rect x="162" y="324" width="14" height="14" rx="3.5" fill="#c93a2b"/><path d="M166.5 328.5l5 5m0-5l-5 5" stroke="#fff" stroke-width="1.150"/><rect x="0" y="344" width="14" height="14" rx="3.5" fill="#1f4e16"/><path d="M3.67 351.00l2.08 2.08 4.59-4.58" stroke="#e4efe2" stroke-opacity=".8" stroke-width=".9"/><rect x="18" y="344" width="14" height="14" rx="3.5" fill="#1f4e16"/><path d="M21.67 351.00l2.08 2.08 4.59-4.58" stroke="#e4efe2" stroke-opacity=".8" stroke-width=".9"/><rect x="36" y="344" width="14" height="14" rx="3.5" fill="#1f4e16"/><path d="M39.67 351.00l2.08 2.08 4.59-4.58" stroke="#e4efe2" stroke-opacity=".8" stroke-width=".9"/><rect x="54" y="344" width="14" height="14" rx="3.5" fill="#1f4e16"/><path d="M57.67 351.00l2.08 2.08 4.59-4.58" stroke="#e4efe2" stroke-opacity=".8" stroke-width=".9"/><rect x="72" y="344" width="14" height="14" rx="3.5" fill="#1f4e16"/><path d="M75.67 351.00l2.08 2.08 4.59-4.58" stroke="#e4efe2" stroke-opacity=".8" stroke-width=".9"/><rect x="90" y="344" width="14" height="14" rx="3.5" fill="#1f4e16"/><path d="M93.67 351.00l2.08 2.08 4.59-4.58" stroke="#e4efe2" stroke-opacity=".8" stroke-width=".9"/><rect x="108" y="344" width="14" height="14" rx="3.5" fill="#1f4e16"/><path d="M111.67 351.00l2.08 2.08 4.59-4.58" stroke="#e4efe2" stroke-opacity=".8" stroke-width=".9"/><rect x="126" y="344" width="14" height="14" rx="3.5" fill="#1f4e16"/><path d="M129.67 351.00l2.08 2.08 4.59-4.58" stroke="#e4efe2" stroke-opacity=".8" stroke-width=".9"/><rect x="144" y="344" width="14" height="14" rx="3.5" fill="#1f4e16"/><path d="M147.67 351.00l2.08 2.08 4.59-4.58" stroke="#e4efe2" stroke-opacity=".8" stroke-width=".9"/><rect x="162" y="344" width="14" height="14" rx="3.5" fill="#1f4e16"/><path d="M165.67 351.00l2.08 2.08 4.59-4.58" stroke="#e4efe2" stroke-opacity=".8" stroke-width=".9"/><rect x="0" y="364" width="14" height="14" rx="3.5" fill="#1f4e16"/><path d="M3.67 371.00l2.08 2.08 4.59-4.58" stroke="#e4efe2" stroke-opacity=".8" stroke-width=".9"/><rect x="18" y="364" width="14" height="14" rx="3.5" fill="#ef7b28"/><g transform="translate(20 366) scale(.4167)" stroke="#000" stroke-opacity=".85" stroke-width="2.300"><path d="M12 2a10 10 0 0 1 7.38 16.75M16 12l-4-4-4 4M12 16V8M2.5 8.875a10 10 0 0 0-.5 3M2.83 16a10 10 0 0 0 2.43 3.4M4.636 5.235a10 10 0 0 1 .891-.857M8.644 21.42a10 10 0 0 0 7.631-.38"/></g><rect x="36" y="364" width="14" height="14" rx="3.5" fill="#ef7b28"/><g transform="translate(38 366) scale(.4167)" stroke="#000" stroke-opacity=".85" stroke-width="2.300"><path d="M12 2a10 10 0 0 1 7.38 16.75M16 12l-4-4-4 4M12 16V8M2.5 8.875a10 10 0 0 0-.5 3M2.83 16a10 10 0 0 0 2.43 3.4M4.636 5.235a10 10 0 0 1 .891-.857M8.644 21.42a10 10 0 0 0 7.631-.38"/></g><rect x="54" y="364" width="14" height="14" rx="3.5" fill="#ef7b28"/><g transform="translate(56 366) scale(.4167)" stroke="#000" stroke-opacity=".85" stroke-width="2.300"><path d="M12 2a10 10 0 0 1 7.38 16.75M16 12l-4-4-4 4M12 16V8M2.5 8.875a10 10 0 0 0-.5 3M2.83 16a10 10 0 0 0 2.43 3.4M4.636 5.235a10 10 0 0 1 .891-.857M8.644 21.42a10 10 0 0 0 7.631-.38"/></g><rect x="72" y="364" width="14" height="14" rx="3.5" fill="#1f4e16"/><path d="M75.67 371.00l2.08 2.08 4.59-4.58" stroke="#e4efe2" stroke-opacity=".8" stroke-width=".9"/><rect x="90" y="364" width="14" height="14" rx="3.5" fill="#ef7b28"/><g transform="translate(92 366) scale(.4167)" stroke="#000" stroke-opacity=".85" stroke-width="2.300"><path d="M12 2a10 10 0 0 1 7.38 16.75M16 12l-4-4-4 4M12 16V8M2.5 8.875a10 10 0 0 0-.5 3M2.83 16a10 10 0 0 0 2.43 3.4M4.636 5.235a10 10 0 0 1 .891-.857M8.644 21.42a10 10 0 0 0 7.631-.38"/></g><rect x="108" y="364" width="14" height="14" rx="3.5" fill="#1f4e16"/><path d="M111.67 371.00l2.08 2.08 4.59-4.58" stroke="#e4efe2" stroke-opacity=".8" stroke-width=".9"/><rect x="126" y="364" width="14" height="14" rx="3.5" fill="#ef7b28"/><g transform="translate(128 366) scale(.4167)" stroke="#000" stroke-opacity=".85" stroke-width="2.300"><path d="M12 2a10 10 0 0 1 7.38 16.75M16 12l-4-4-4 4M12 16V8M2.5 8.875a10 10 0 0 0-.5 3M2.83 16a10 10 0 0 0 2.43 3.4M4.636 5.235a10 10 0 0 1 .891-.857M8.644 21.42a10 10 0 0 0 7.631-.38"/></g><rect x="144" y="364" width="14" height="14" rx="3.5" fill="#ef7b28"/><g transform="translate(146 366) scale(.4167)" stroke="#000" stroke-opacity=".85" stroke-width="2.300"><path d="M12 2a10 10 0 0 1 7.38 16.75M16 12l-4-4-4 4M12 16V8M2.5 8.875a10 10 0 0 0-.5 3M2.83 16a10 10 0 0 0 2.43 3.4M4.636 5.235a10 10 0 0 1 .891-.857M8.644 21.42a10 10 0 0 0 7.631-.38"/></g><rect x="162" y="364" width="14" height="14" rx="3.5" fill="#ef7b28"/><g transform="translate(164 366) scale(.4167)" stroke="#000" stroke-opacity=".85" stroke-width="2.300"><path d="M12 2a10 10 0 0 1 7.38 16.75M16 12l-4-4-4 4M12 16V8M2.5 8.875a10 10 0 0 0-.5 3M2.83 16a10 10 0 0 0 2.43 3.4M4.636 5.235a10 10 0 0 1 .891-.857M8.644 21.42a10 10 0 0 0 7.631-.38"/></g><rect x="0" y="384" width="14" height="14" rx="3.5" fill="#1f4e16"/><path d="M3.67 391.00l2.08 2.08 4.59-4.58" stroke="#e4efe2" stroke-opacity=".8" stroke-width=".9"/><rect x="18" y="384" width="14" height="14" rx="3.5" fill="#ef7b28"/><g transform="translate(20 386) scale(.4167)" stroke="#000" stroke-opacity=".85" stroke-width="2.300"><path d="M12 2a10 10 0 0 1 7.38 16.75M16 12l-4-4-4 4M12 16V8M2.5 8.875a10 10 0 0 0-.5 3M2.83 16a10 10 0 0 0 2.43 3.4M4.636 5.235a10 10 0 0 1 .891-.857M8.644 21.42a10 10 0 0 0 7.631-.38"/></g><rect x="36" y="384" width="14" height="14" rx="3.5" fill="#ef7b28"/><g transform="translate(38 386) scale(.4167)" stroke="#000" stroke-opacity=".85" stroke-width="2.300"><path d="M12 2a10 10 0 0 1 7.38 16.75M16 12l-4-4-4 4M12 16V8M2.5 8.875a10 10 0 0 0-.5 3M2.83 16a10 10 0 0 0 2.43 3.4M4.636 5.235a10 10 0 0 1 .891-.857M8.644 21.42a10 10 0 0 0 7.631-.38"/></g><rect x="54" y="384" width="14" height="14" rx="3.5" fill="#ef7b28"/><g transform="translate(56 386) scale(.4167)" stroke="#000" stroke-opacity=".85" stroke-width="2.300"><path d="M12 2a10 10 0 0 1 7.38 16.75M16 12l-4-4-4 4M12 16V8M2.5 8.875a10 10 0 0 0-.5 3M2.83 16a10 10 0 0 0 2.43 3.4M4.636 5.235a10 10 0 0 1 .891-.857M8.644 21.42a10 10 0 0 0 7.631-.38"/></g><rect x="72" y="384" width="14" height="14" rx="3.5" fill="#1f4e16"/><path d="M75.67 391.00l2.08 2.08 4.59-4.58" stroke="#e4efe2" stroke-opacity=".8" stroke-width=".9"/><rect x="90" y="384" width="14" height="14" rx="3.5" fill="#ef7b28"/><g transform="translate(92 386) scale(.4167)" stroke="#000" stroke-opacity=".85" stroke-width="2.300"><path d="M12 2a10 10 0 0 1 7.38 16.75M16 12l-4-4-4 4M12 16V8M2.5 8.875a10 10 0 0 0-.5 3M2.83 16a10 10 0 0 0 2.43 3.4M4.636 5.235a10 10 0 0 1 .891-.857M8.644 21.42a10 10 0 0 0 7.631-.38"/></g><rect x="108" y="384" width="14" height="14" rx="3.5" fill="#1f4e16"/><path d="M111.67 391.00l2.08 2.08 4.59-4.58" stroke="#e4efe2" stroke-opacity=".8" stroke-width=".9"/><rect x="126" y="384" width="14" height="14" rx="3.5" fill="#ef7b28"/><g transform="translate(128 386) scale(.4167)" stroke="#000" stroke-opacity=".85" stroke-width="2.300"><path d="M12 2a10 10 0 0 1 7.38 16.75M16 12l-4-4-4 4M12 16V8M2.5 8.875a10 10 0 0 0-.5 3M2.83 16a10 10 0 0 0 2.43 3.4M4.636 5.235a10 10 0 0 1 .891-.857M8.644 21.42a10 10 0 0 0 7.631-.38"/></g><rect x="144" y="384" width="14" height="14" rx="3.5" fill="#ef7b28"/><g transform="translate(146 386) scale(.4167)" stroke="#000" stroke-opacity=".85" stroke-width="2.300"><path d="M12 2a10 10 0 0 1 7.38 16.75M16 12l-4-4-4 4M12 16V8M2.5 8.875a10 10 0 0 0-.5 3M2.83 16a10 10 0 0 0 2.43 3.4M4.636 5.235a10 10 0 0 1 .891-.857M8.644 21.42a10 10 0 0 0 7.631-.38"/></g><rect x="162" y="384" width="14" height="14" rx="3.5" fill="#ef7b28"/><g transform="translate(164 386) scale(.4167)" stroke="#000" stroke-opacity=".85" stroke-width="2.300"><path d="M12 2a10 10 0 0 1 7.38 16.75M16 12l-4-4-4 4M12 16V8M2.5 8.875a10 10 0 0 0-.5 3M2.83 16a10 10 0 0 0 2.43 3.4M4.636 5.235a10 10 0 0 1 .891-.857M8.644 21.42a10 10 0 0 0 7.631-.38"/></g><rect x="0" y="404" width="14" height="14" rx="3.5" fill="#1f4e16"/><path d="M3.67 411.00l2.08 2.08 4.59-4.58" stroke="#e4efe2" stroke-opacity=".8" stroke-width=".9"/><rect x="18" y="404" width="14" height="14" rx="3.5" fill="#ef7b28"/><g transform="translate(20 406) scale(.4167)" stroke="#000" stroke-opacity=".85" stroke-width="2.300"><path d="M12 2a10 10 0 0 1 7.38 16.75M16 12l-4-4-4 4M12 16V8M2.5 8.875a10 10 0 0 0-.5 3M2.83 16a10 10 0 0 0 2.43 3.4M4.636 5.235a10 10 0 0 1 .891-.857M8.644 21.42a10 10 0 0 0 7.631-.38"/></g><rect x="36" y="404" width="14" height="14" rx="3.5" fill="#ef7b28"/><g transform="translate(38 406) scale(.4167)" stroke="#000" stroke-opacity=".85" stroke-width="2.300"><path d="M12 2a10 10 0 0 1 7.38 16.75M16 12l-4-4-4 4M12 16V8M2.5 8.875a10 10 0 0 0-.5 3M2.83 16a10 10 0 0 0 2.43 3.4M4.636 5.235a10 10 0 0 1 .891-.857M8.644 21.42a10 10 0 0 0 7.631-.38"/></g><rect x="54" y="404" width="14" height="14" rx="3.5" fill="#ef7b28"/><g transform="translate(56 406) scale(.4167)" stroke="#000" stroke-opacity=".85" stroke-width="2.300"><path d="M12 2a10 10 0 0 1 7.38 16.75M16 12l-4-4-4 4M12 16V8M2.5 8.875a10 10 0 0 0-.5 3M2.83 16a10 10 0 0 0 2.43 3.4M4.636 5.235a10 10 0 0 1 .891-.857M8.644 21.42a10 10 0 0 0 7.631-.38"/></g><rect x="72" y="404" width="14" height="14" rx="3.5" fill="#1f4e16"/><path d="M75.67 411.00l2.08 2.08 4.59-4.58" stroke="#e4efe2" stroke-opacity=".8" stroke-width=".9"/><rect x="90" y="404" width="14" height="14" rx="3.5" fill="#ef7b28"/><g transform="translate(92 406) scale(.4167)" stroke="#000" stroke-opacity=".85" stroke-width="2.300"><path d="M12 2a10 10 0 0 1 7.38 16.75M16 12l-4-4-4 4M12 16V8M2.5 8.875a10 10 0 0 0-.5 3M2.83 16a10 10 0 0 0 2.43 3.4M4.636 5.235a10 10 0 0 1 .891-.857M8.644 21.42a10 10 0 0 0 7.631-.38"/></g><rect x="108" y="404" width="14" height="14" rx="3.5" fill="#1f4e16"/><path d="M111.67 411.00l2.08 2.08 4.59-4.58" stroke="#e4efe2" stroke-opacity=".8" stroke-width=".9"/><rect x="126" y="404" width="14" height="14" rx="3.5" fill="#ef7b28"/><g transform="translate(128 406) scale(.4167)" stroke="#000" stroke-opacity=".85" stroke-width="2.300"><path d="M12 2a10 10 0 0 1 7.38 16.75M16 12l-4-4-4 4M12 16V8M2.5 8.875a10 10 0 0 0-.5 3M2.83 16a10 10 0 0 0 2.43 3.4M4.636 5.235a10 10 0 0 1 .891-.857M8.644 21.42a10 10 0 0 0 7.631-.38"/></g><rect x="144" y="404" width="14" height="14" rx="3.5" fill="#ef7b28"/><g transform="translate(146 406) scale(.4167)" stroke="#000" stroke-opacity=".85" stroke-width="2.300"><path d="M12 2a10 10 0 0 1 7.38 16.75M16 12l-4-4-4 4M12 16V8M2.5 8.875a10 10 0 0 0-.5 3M2.83 16a10 10 0 0 0 2.43 3.4M4.636 5.235a10 10 0 0 1 .891-.857M8.644 21.42a10 10 0 0 0 7.631-.38"/></g><rect x="162" y="404" width="14" height="14" rx="3.5" fill="#ef7b28"/><g transform="translate(164 406) scale(.4167)" stroke="#000" stroke-opacity=".85" stroke-width="2.300"><path d="M12 2a10 10 0 0 1 7.38 16.75M16 12l-4-4-4 4M12 16V8M2.5 8.875a10 10 0 0 0-.5 3M2.83 16a10 10 0 0 0 2.43 3.4M4.636 5.235a10 10 0 0 1 .891-.857M8.644 21.42a10 10 0 0 0 7.631-.38"/></g><rect x="0" y="424" width="14" height="14" rx="3.5" fill="#1f4e16"/><path d="M3.67 431.00l2.08 2.08 4.59-4.58" stroke="#e4efe2" stroke-opacity=".8" stroke-width=".9"/><rect x="18" y="424" width="14" height="14" rx="3.5" fill="#ef7b28"/><g transform="translate(20 426) scale(.4167)" stroke="#000" stroke-opacity=".85" stroke-width="2.300"><path d="M12 2a10 10 0 0 1 7.38 16.75M16 12l-4-4-4 4M12 16V8M2.5 8.875a10 10 0 0 0-.5 3M2.83 16a10 10 0 0 0 2.43 3.4M4.636 5.235a10 10 0 0 1 .891-.857M8.644 21.42a10 10 0 0 0 7.631-.38"/></g><rect x="36" y="424" width="14" height="14" rx="3.5" fill="#ef7b28"/><g transform="translate(38 426) scale(.4167)" stroke="#000" stroke-opacity=".85" stroke-width="2.300"><path d="M12 2a10 10 0 0 1 7.38 16.75M16 12l-4-4-4 4M12 16V8M2.5 8.875a10 10 0 0 0-.5 3M2.83 16a10 10 0 0 0 2.43 3.4M4.636 5.235a10 10 0 0 1 .891-.857M8.644 21.42a10 10 0 0 0 7.631-.38"/></g><rect x="54" y="424" width="14" height="14" rx="3.5" fill="#ef7b28"/><g transform="translate(56 426) scale(.4167)" stroke="#000" stroke-opacity=".85" stroke-width="2.300"><path d="M12 2a10 10 0 0 1 7.38 16.75M16 12l-4-4-4 4M12 16V8M2.5 8.875a10 10 0 0 0-.5 3M2.83 16a10 10 0 0 0 2.43 3.4M4.636 5.235a10 10 0 0 1 .891-.857M8.644 21.42a10 10 0 0 0 7.631-.38"/></g><rect x="72" y="424" width="14" height="14" rx="3.5" fill="#1f4e16"/><path d="M75.67 431.00l2.08 2.08 4.59-4.58" stroke="#e4efe2" stroke-opacity=".8" stroke-width=".9"/><rect x="90" y="424" width="14" height="14" rx="3.5" fill="#ef7b28"/><g transform="translate(92 426) scale(.4167)" stroke="#000" stroke-opacity=".85" stroke-width="2.300"><path d="M12 2a10 10 0 0 1 7.38 16.75M16 12l-4-4-4 4M12 16V8M2.5 8.875a10 10 0 0 0-.5 3M2.83 16a10 10 0 0 0 2.43 3.4M4.636 5.235a10 10 0 0 1 .891-.857M8.644 21.42a10 10 0 0 0 7.631-.38"/></g><rect x="108" y="424" width="14" height="14" rx="3.5" fill="#1f4e16"/><path d="M111.67 431.00l2.08 2.08 4.59-4.58" stroke="#e4efe2" stroke-opacity=".8" stroke-width=".9"/><rect x="126" y="424" width="14" height="14" rx="3.5" fill="#ef7b28"/><g transform="translate(128 426) scale(.4167)" stroke="#000" stroke-opacity=".85" stroke-width="2.300"><path d="M12 2a10 10 0 0 1 7.38 16.75M16 12l-4-4-4 4M12 16V8M2.5 8.875a10 10 0 0 0-.5 3M2.83 16a10 10 0 0 0 2.43 3.4M4.636 5.235a10 10 0 0 1 .891-.857M8.644 21.42a10 10 0 0 0 7.631-.38"/></g><rect x="144" y="424" width="14" height="14" rx="3.5" fill="#ef7b28"/><g transform="translate(146 426) scale(.4167)" stroke="#000" stroke-opacity=".85" stroke-width="2.300"><path d="M12 2a10 10 0 0 1 7.38 16.75M16 12l-4-4-4 4M12 16V8M2.5 8.875a10 10 0 0 0-.5 3M2.83 16a10 10 0 0 0 2.43 3.4M4.636 5.235a10 10 0 0 1 .891-.857M8.644 21.42a10 10 0 0 0 7.631-.38"/></g><rect x="162" y="424" width="14" height="14" rx="3.5" fill="#ef7b28"/><g transform="translate(164 426) scale(.4167)" stroke="#000" stroke-opacity=".85" stroke-width="2.300"><path d="M12 2a10 10 0 0 1 7.38 16.75M16 12l-4-4-4 4M12 16V8M2.5 8.875a10 10 0 0 0-.5 3M2.83 16a10 10 0 0 0 2.43 3.4M4.636 5.235a10 10 0 0 1 .891-.857M8.644 21.42a10 10 0 0 0 7.631-.38"/></g><rect x="0" y="444" width="14" height="14" rx="3.5" fill="#1f4e16"/><path d="M3.67 451.00l2.08 2.08 4.59-4.58" stroke="#e4efe2" stroke-opacity=".8" stroke-width=".9"/><rect x="18" y="444" width="14" height="14" rx="3.5" fill="#ef7b28"/><g transform="translate(20 446) scale(.4167)" stroke="#000" stroke-opacity=".85" stroke-width="2.300"><path d="M12 2a10 10 0 0 1 7.38 16.75M16 12l-4-4-4 4M12 16V8M2.5 8.875a10 10 0 0 0-.5 3M2.83 16a10 10 0 0 0 2.43 3.4M4.636 5.235a10 10 0 0 1 .891-.857M8.644 21.42a10 10 0 0 0 7.631-.38"/></g><rect x="36" y="444" width="14" height="14" rx="3.5" fill="#ef7b28"/><g transform="translate(38 446) scale(.4167)" stroke="#000" stroke-opacity=".85" stroke-width="2.300"><path d="M12 2a10 10 0 0 1 7.38 16.75M16 12l-4-4-4 4M12 16V8M2.5 8.875a10 10 0 0 0-.5 3M2.83 16a10 10 0 0 0 2.43 3.4M4.636 5.235a10 10 0 0 1 .891-.857M8.644 21.42a10 10 0 0 0 7.631-.38"/></g><rect x="54" y="444" width="14" height="14" rx="3.5" fill="#ef7b28"/><g transform="translate(56 446) scale(.4167)" stroke="#000" stroke-opacity=".85" stroke-width="2.300"><path d="M12 2a10 10 0 0 1 7.38 16.75M16 12l-4-4-4 4M12 16V8M2.5 8.875a10 10 0 0 0-.5 3M2.83 16a10 10 0 0 0 2.43 3.4M4.636 5.235a10 10 0 0 1 .891-.857M8.644 21.42a10 10 0 0 0 7.631-.38"/></g><rect x="72" y="444" width="14" height="14" rx="3.5" fill="#1f4e16"/><path d="M75.67 451.00l2.08 2.08 4.59-4.58" stroke="#e4efe2" stroke-opacity=".8" stroke-width=".9"/><rect x="90" y="444" width="14" height="14" rx="3.5" fill="#ef7b28"/><g transform="translate(92 446) scale(.4167)" stroke="#000" stroke-opacity=".85" stroke-width="2.300"><path d="M12 2a10 10 0 0 1 7.38 16.75M16 12l-4-4-4 4M12 16V8M2.5 8.875a10 10 0 0 0-.5 3M2.83 16a10 10 0 0 0 2.43 3.4M4.636 5.235a10 10 0 0 1 .891-.857M8.644 21.42a10 10 0 0 0 7.631-.38"/></g><rect x="108" y="444" width="14" height="14" rx="3.5" fill="#1f4e16"/><path d="M111.67 451.00l2.08 2.08 4.59-4.58" stroke="#e4efe2" stroke-opacity=".8" stroke-width=".9"/><rect x="126" y="444" width="14" height="14" rx="3.5" fill="#ef7b28"/><g transform="translate(128 446) scale(.4167)" stroke="#000" stroke-opacity=".85" stroke-width="2.300"><path d="M12 2a10 10 0 0 1 7.38 16.75M16 12l-4-4-4 4M12 16V8M2.5 8.875a10 10 0 0 0-.5 3M2.83 16a10 10 0 0 0 2.43 3.4M4.636 5.235a10 10 0 0 1 .891-.857M8.644 21.42a10 10 0 0 0 7.631-.38"/></g><rect x="144" y="444" width="14" height="14" rx="3.5" fill="#ef7b28"/><g transform="translate(146 446) scale(.4167)" stroke="#000" stroke-opacity=".85" stroke-width="2.300"><path d="M12 2a10 10 0 0 1 7.38 16.75M16 12l-4-4-4 4M12 16V8M2.5 8.875a10 10 0 0 0-.5 3M2.83 16a10 10 0 0 0 2.43 3.4M4.636 5.235a10 10 0 0 1 .891-.857M8.644 21.42a10 10 0 0 0 7.631-.38"/></g><rect x="162" y="444" width="14" height="14" rx="3.5" fill="#ef7b28"/><g transform="translate(164 446) scale(.4167)" stroke="#000" stroke-opacity=".85" stroke-width="2.300"><path d="M12 2a10 10 0 0 1 7.38 16.75M16 12l-4-4-4 4M12 16V8M2.5 8.875a10 10 0 0 0-.5 3M2.83 16a10 10 0 0 0 2.43 3.4M4.636 5.235a10 10 0 0 1 .891-.857M8.644 21.42a10 10 0 0 0 7.631-.38"/></g><rect x="0" y="464" width="14" height="14" rx="3.5" fill="#1f4e16"/><path d="M3.67 471.00l2.08 2.08 4.59-4.58" stroke="#e4efe2" stroke-opacity=".8" stroke-width=".9"/><rect x="18" y="464" width="14" height="14" rx="3.5" fill="#ef7b28"/><g transform="translate(20 466) scale(.4167)" stroke="#000" stroke-opacity=".85" stroke-width="2.300"><path d="M12 2a10 10 0 0 1 7.38 16.75M16 12l-4-4-4 4M12 16V8M2.5 8.875a10 10 0 0 0-.5 3M2.83 16a10 10 0 0 0 2.43 3.4M4.636 5.235a10 10 0 0 1 .891-.857M8.644 21.42a10 10 0 0 0 7.631-.38"/></g><rect x="36" y="464" width="14" height="14" rx="3.5" fill="#ef7b28"/><g transform="translate(38 466) scale(.4167)" stroke="#000" stroke-opacity=".85" stroke-width="2.300"><path d="M12 2a10 10 0 0 1 7.38 16.75M16 12l-4-4-4 4M12 16V8M2.5 8.875a10 10 0 0 0-.5 3M2.83 16a10 10 0 0 0 2.43 3.4M4.636 5.235a10 10 0 0 1 .891-.857M8.644 21.42a10 10 0 0 0 7.631-.38"/></g><rect x="54" y="464" width="14" height="14" rx="3.5" fill="#ef7b28"/><g transform="translate(56 466) scale(.4167)" stroke="#000" stroke-opacity=".85" stroke-width="2.300"><path d="M12 2a10 10 0 0 1 7.38 16.75M16 12l-4-4-4 4M12 16V8M2.5 8.875a10 10 0 0 0-.5 3M2.83 16a10 10 0 0 0 2.43 3.4M4.636 5.235a10 10 0 0 1 .891-.857M8.644 21.42a10 10 0 0 0 7.631-.38"/></g><rect x="72" y="464" width="14" height="14" rx="3.5" fill="#1f4e16"/><path d="M75.67 471.00l2.08 2.08 4.59-4.58" stroke="#e4efe2" stroke-opacity=".8" stroke-width=".9"/><rect x="90" y="464" width="14" height="14" rx="3.5" fill="#ef7b28"/><g transform="translate(92 466) scale(.4167)" stroke="#000" stroke-opacity=".85" stroke-width="2.300"><path d="M12 2a10 10 0 0 1 7.38 16.75M16 12l-4-4-4 4M12 16V8M2.5 8.875a10 10 0 0 0-.5 3M2.83 16a10 10 0 0 0 2.43 3.4M4.636 5.235a10 10 0 0 1 .891-.857M8.644 21.42a10 10 0 0 0 7.631-.38"/></g><rect x="108" y="464" width="14" height="14" rx="3.5" fill="#1f4e16"/><path d="M111.67 471.00l2.08 2.08 4.59-4.58" stroke="#e4efe2" stroke-opacity=".8" stroke-width=".9"/><rect x="126" y="464" width="14" height="14" rx="3.5" fill="#ef7b28"/><g transform="translate(128 466) scale(.4167)" stroke="#000" stroke-opacity=".85" stroke-width="2.300"><path d="M12 2a10 10 0 0 1 7.38 16.75M16 12l-4-4-4 4M12 16V8M2.5 8.875a10 10 0 0 0-.5 3M2.83 16a10 10 0 0 0 2.43 3.4M4.636 5.235a10 10 0 0 1 .891-.857M8.644 21.42a10 10 0 0 0 7.631-.38"/></g><rect x="144" y="464" width="14" height="14" rx="3.5" fill="#ef7b28"/><g transform="translate(146 466) scale(.4167)" stroke="#000" stroke-opacity=".85" stroke-width="2.300"><path d="M12 2a10 10 0 0 1 7.38 16.75M16 12l-4-4-4 4M12 16V8M2.5 8.875a10 10 0 0 0-.5 3M2.83 16a10 10 0 0 0 2.43 3.4M4.636 5.235a10 10 0 0 1 .891-.857M8.644 21.42a10 10 0 0 0 7.631-.38"/></g><rect x="162" y="464" width="14" height="14" rx="3.5" fill="#ef7b28"/><g transform="translate(164 466) scale(.4167)" stroke="#000" stroke-opacity=".85" stroke-width="2.300"><path d="M12 2a10 10 0 0 1 7.38 16.75M16 12l-4-4-4 4M12 16V8M2.5 8.875a10 10 0 0 0-.5 3M2.83 16a10 10 0 0 0 2.43 3.4M4.636 5.235a10 10 0 0 1 .891-.857M8.644 21.42a10 10 0 0 0 7.631-.38"/></g><rect x="0" y="484" width="14" height="14" rx="3.5" fill="#1f4e16"/><path d="M3.67 491.00l2.08 2.08 4.59-4.58" stroke="#e4efe2" stroke-opacity=".8" stroke-width=".9"/><rect x="18" y="484" width="14" height="14" rx="3.5" fill="#ef7b28"/><g transform="translate(20 486) scale(.4167)" stroke="#000" stroke-opacity=".85" stroke-width="2.300"><path d="M12 2a10 10 0 0 1 7.38 16.75M16 12l-4-4-4 4M12 16V8M2.5 8.875a10 10 0 0 0-.5 3M2.83 16a10 10 0 0 0 2.43 3.4M4.636 5.235a10 10 0 0 1 .891-.857M8.644 21.42a10 10 0 0 0 7.631-.38"/></g><rect x="36" y="484" width="14" height="14" rx="3.5" fill="#ef7b28"/><g transform="translate(38 486) scale(.4167)" stroke="#000" stroke-opacity=".85" stroke-width="2.300"><path d="M12 2a10 10 0 0 1 7.38 16.75M16 12l-4-4-4 4M12 16V8M2.5 8.875a10 10 0 0 0-.5 3M2.83 16a10 10 0 0 0 2.43 3.4M4.636 5.235a10 10 0 0 1 .891-.857M8.644 21.42a10 10 0 0 0 7.631-.38"/></g><rect x="54" y="484" width="14" height="14" rx="3.5" fill="#ef7b28"/><g transform="translate(56 486) scale(.4167)" stroke="#000" stroke-opacity=".85" stroke-width="2.300"><path d="M12 2a10 10 0 0 1 7.38 16.75M16 12l-4-4-4 4M12 16V8M2.5 8.875a10 10 0 0 0-.5 3M2.83 16a10 10 0 0 0 2.43 3.4M4.636 5.235a10 10 0 0 1 .891-.857M8.644 21.42a10 10 0 0 0 7.631-.38"/></g><rect x="72" y="484" width="14" height="14" rx="3.5" fill="#1f4e16"/><path d="M75.67 491.00l2.08 2.08 4.59-4.58" stroke="#e4efe2" stroke-opacity=".8" stroke-width=".9"/><rect x="90" y="484" width="14" height="14" rx="3.5" fill="#ef7b28"/><g transform="translate(92 486) scale(.4167)" stroke="#000" stroke-opacity=".85" stroke-width="2.300"><path d="M12 2a10 10 0 0 1 7.38 16.75M16 12l-4-4-4 4M12 16V8M2.5 8.875a10 10 0 0 0-.5 3M2.83 16a10 10 0 0 0 2.43 3.4M4.636 5.235a10 10 0 0 1 .891-.857M8.644 21.42a10 10 0 0 0 7.631-.38"/></g><rect x="108" y="484" width="14" height="14" rx="3.5" fill="#1f4e16"/><path d="M111.67 491.00l2.08 2.08 4.59-4.58" stroke="#e4efe2" stroke-opacity=".8" stroke-width=".9"/><rect x="126" y="484" width="14" height="14" rx="3.5" fill="#ef7b28"/><g transform="translate(128 486) scale(.4167)" stroke="#000" stroke-opacity=".85" stroke-width="2.300"><path d="M12 2a10 10 0 0 1 7.38 16.75M16 12l-4-4-4 4M12 16V8M2.5 8.875a10 10 0 0 0-.5 3M2.83 16a10 10 0 0 0 2.43 3.4M4.636 5.235a10 10 0 0 1 .891-.857M8.644 21.42a10 10 0 0 0 7.631-.38"/></g><rect x="144" y="484" width="14" height="14" rx="3.5" fill="#ef7b28"/><g transform="translate(146 486) scale(.4167)" stroke="#000" stroke-opacity=".85" stroke-width="2.300"><path d="M12 2a10 10 0 0 1 7.38 16.75M16 12l-4-4-4 4M12 16V8M2.5 8.875a10 10 0 0 0-.5 3M2.83 16a10 10 0 0 0 2.43 3.4M4.636 5.235a10 10 0 0 1 .891-.857M8.644 21.42a10 10 0 0 0 7.631-.38"/></g><rect x="162" y="484" width="14" height="14" rx="3.5" fill="#ef7b28"/><g transform="translate(164 486) scale(.4167)" stroke="#000" stroke-opacity=".85" stroke-width="2.300"><path d="M12 2a10 10 0 0 1 7.38 16.75M16 12l-4-4-4 4M12 16V8M2.5 8.875a10 10 0 0 0-.5 3M2.83 16a10 10 0 0 0 2.43 3.4M4.636 5.235a10 10 0 0 1 .891-.857M8.644 21.42a10 10 0 0 0 7.631-.38"/></g><rect x="0" y="504" width="14" height="14" rx="3.5" fill="#1f4e16"/><path d="M3.67 511.00l2.08 2.08 4.59-4.58" stroke="#e4efe2" stroke-opacity=".8" stroke-width=".9"/><rect x="18" y="504" width="14" height="14" rx="3.5" fill="#ef7b28"/><g transform="translate(20 506) scale(.4167)" stroke="#000" stroke-opacity=".85" stroke-width="2.300"><path d="M12 2a10 10 0 0 1 7.38 16.75M16 12l-4-4-4 4M12 16V8M2.5 8.875a10 10 0 0 0-.5 3M2.83 16a10 10 0 0 0 2.43 3.4M4.636 5.235a10 10 0 0 1 .891-.857M8.644 21.42a10 10 0 0 0 7.631-.38"/></g><rect x="36" y="504" width="14" height="14" rx="3.5" fill="#ef7b28"/><g transform="translate(38 506) scale(.4167)" stroke="#000" stroke-opacity=".85" stroke-width="2.300"><path d="M12 2a10 10 0 0 1 7.38 16.75M16 12l-4-4-4 4M12 16V8M2.5 8.875a10 10 0 0 0-.5 3M2.83 16a10 10 0 0 0 2.43 3.4M4.636 5.235a10 10 0 0 1 .891-.857M8.644 21.42a10 10 0 0 0 7.631-.38"/></g><rect x="54" y="504" width="14" height="14" rx="3.5" fill="#ef7b28"/><g transform="translate(56 506) scale(.4167)" stroke="#000" stroke-opacity=".85" stroke-width="2.300"><path d="M12 2a10 10 0 0 1 7.38 16.75M16 12l-4-4-4 4M12 16V8M2.5 8.875a10 10 0 0 0-.5 3M2.83 16a10 10 0 0 0 2.43 3.4M4.636 5.235a10 10 0 0 1 .891-.857M8.644 21.42a10 10 0 0 0 7.631-.38"/></g><rect x="72" y="504" width="14" height="14" rx="3.5" fill="#1f4e16"/><path d="M75.67 511.00l2.08 2.08 4.59-4.58" stroke="#e4efe2" stroke-opacity=".8" stroke-width=".9"/><rect x="90" y="504" width="14" height="14" rx="3.5" fill="#ef7b28"/><g transform="translate(92 506) scale(.4167)" stroke="#000" stroke-opacity=".85" stroke-width="2.300"><path d="M12 2a10 10 0 0 1 7.38 16.75M16 12l-4-4-4 4M12 16V8M2.5 8.875a10 10 0 0 0-.5 3M2.83 16a10 10 0 0 0 2.43 3.4M4.636 5.235a10 10 0 0 1 .891-.857M8.644 21.42a10 10 0 0 0 7.631-.38"/></g><rect x="108" y="504" width="14" height="14" rx="3.5" fill="#1f4e16"/><path d="M111.67 511.00l2.08 2.08 4.59-4.58" stroke="#e4efe2" stroke-opacity=".8" stroke-width=".9"/><rect x="126" y="504" width="14" height="14" rx="3.5" fill="#ef7b28"/><g transform="translate(128 506) scale(.4167)" stroke="#000" stroke-opacity=".85" stroke-width="2.300"><path d="M12 2a10 10 0 0 1 7.38 16.75M16 12l-4-4-4 4M12 16V8M2.5 8.875a10 10 0 0 0-.5 3M2.83 16a10 10 0 0 0 2.43 3.4M4.636 5.235a10 10 0 0 1 .891-.857M8.644 21.42a10 10 0 0 0 7.631-.38"/></g><rect x="144" y="504" width="14" height="14" rx="3.5" fill="#ef7b28"/><g transform="translate(146 506) scale(.4167)" stroke="#000" stroke-opacity=".85" stroke-width="2.300"><path d="M12 2a10 10 0 0 1 7.38 16.75M16 12l-4-4-4 4M12 16V8M2.5 8.875a10 10 0 0 0-.5 3M2.83 16a10 10 0 0 0 2.43 3.4M4.636 5.235a10 10 0 0 1 .891-.857M8.644 21.42a10 10 0 0 0 7.631-.38"/></g><rect x="162" y="504" width="14" height="14" rx="3.5" fill="#ef7b28"/><g transform="translate(164 506) scale(.4167)" stroke="#000" stroke-opacity=".85" stroke-width="2.300"><path d="M12 2a10 10 0 0 1 7.38 16.75M16 12l-4-4-4 4M12 16V8M2.5 8.875a10 10 0 0 0-.5 3M2.83 16a10 10 0 0 0 2.43 3.4M4.636 5.235a10 10 0 0 1 .891-.857M8.644 21.42a10 10 0 0 0 7.631-.38"/></g><rect x="0" y="524" width="14" height="14" rx="3.5" fill="#1f4e16"/><path d="M3.67 531.00l2.08 2.08 4.59-4.58" stroke="#e4efe2" stroke-opacity=".8" stroke-width=".9"/><rect x="18" y="524" width="14" height="14" rx="3.5" fill="#ef7b28"/><g transform="translate(20 526) scale(.4167)" stroke="#000" stroke-opacity=".85" stroke-width="2.300"><path d="M12 2a10 10 0 0 1 7.38 16.75M16 12l-4-4-4 4M12 16V8M2.5 8.875a10 10 0 0 0-.5 3M2.83 16a10 10 0 0 0 2.43 3.4M4.636 5.235a10 10 0 0 1 .891-.857M8.644 21.42a10 10 0 0 0 7.631-.38"/></g><rect x="36" y="524" width="14" height="14" rx="3.5" fill="#ef7b28"/><g transform="translate(38 526) scale(.4167)" stroke="#000" stroke-opacity=".85" stroke-width="2.300"><path d="M12 2a10 10 0 0 1 7.38 16.75M16 12l-4-4-4 4M12 16V8M2.5 8.875a10 10 0 0 0-.5 3M2.83 16a10 10 0 0 0 2.43 3.4M4.636 5.235a10 10 0 0 1 .891-.857M8.644 21.42a10 10 0 0 0 7.631-.38"/></g><rect x="54" y="524" width="14" height="14" rx="3.5" fill="#ef7b28"/><g transform="translate(56 526) scale(.4167)" stroke="#000" stroke-opacity=".85" stroke-width="2.300"><path d="M12 2a10 10 0 0 1 7.38 16.75M16 12l-4-4-4 4M12 16V8M2.5 8.875a10 10 0 0 0-.5 3M2.83 16a10 10 0 0 0 2.43 3.4M4.636 5.235a10 10 0 0 1 .891-.857M8.644 21.42a10 10 0 0 0 7.631-.38"/></g><rect x="72" y="524" width="14" height="14" rx="3.5" fill="#1f4e16"/><path d="M75.67 531.00l2.08 2.08 4.59-4.58" stroke="#e4efe2" stroke-opacity=".8" stroke-width=".9"/><rect x="90" y="524" width="14" height="14" rx="3.5" fill="#ef7b28"/><g transform="translate(92 526) scale(.4167)" stroke="#000" stroke-opacity=".85" stroke-width="2.300"><path d="M12 2a10 10 0 0 1 7.38 16.75M16 12l-4-4-4 4M12 16V8M2.5 8.875a10 10 0 0 0-.5 3M2.83 16a10 10 0 0 0 2.43 3.4M4.636 5.235a10 10 0 0 1 .891-.857M8.644 21.42a10 10 0 0 0 7.631-.38"/></g><rect x="108" y="524" width="14" height="14" rx="3.5" fill="#1f4e16"/><path d="M111.67 531.00l2.08 2.08 4.59-4.58" stroke="#e4efe2" stroke-opacity=".8" stroke-width=".9"/><rect x="126" y="524" width="14" height="14" rx="3.5" fill="#ef7b28"/><g transform="translate(128 526) scale(.4167)" stroke="#000" stroke-opacity=".85" stroke-width="2.300"><path d="M12 2a10 10 0 0 1 7.38 16.75M16 12l-4-4-4 4M12 16V8M2.5 8.875a10 10 0 0 0-.5 3M2.83 16a10 10 0 0 0 2.43 3.4M4.636 5.235a10 10 0 0 1 .891-.857M8.644 21.42a10 10 0 0 0 7.631-.38"/></g><rect x="144" y="524" width="14" height="14" rx="3.5" fill="#ef7b28"/><g transform="translate(146 526) scale(.4167)" stroke="#000" stroke-opacity=".85" stroke-width="2.300"><path d="M12 2a10 10 0 0 1 7.38 16.75M16 12l-4-4-4 4M12 16V8M2.5 8.875a10 10 0 0 0-.5 3M2.83 16a10 10 0 0 0 2.43 3.4M4.636 5.235a10 10 0 0 1 .891-.857M8.644 21.42a10 10 0 0 0 7.631-.38"/></g><rect x="162" y="524" width="14" height="14" rx="3.5" fill="#ef7b28"/><g transform="translate(164 526) scale(.4167)" stroke="#000" stroke-opacity=".85" stroke-width="2.300"><path d="M12 2a10 10 0 0 1 7.38 16.75M16 12l-4-4-4 4M12 16V8M2.5 8.875a10 10 0 0 0-.5 3M2.83 16a10 10 0 0 0 2.43 3.4M4.636 5.235a10 10 0 0 1 .891-.857M8.644 21.42a10 10 0 0 0 7.631-.38"/></g><rect x="0" y="544" width="14" height="14" rx="3.5" fill="#1f4e16"/><path d="M3.67 551.00l2.08 2.08 4.59-4.58" stroke="#e4efe2" stroke-opacity=".8" stroke-width=".9"/><rect x="18" y="544" width="14" height="14" rx="3.5" fill="#ef7b28"/><g transform="translate(20 546) scale(.4167)" stroke="#000" stroke-opacity=".85" stroke-width="2.300"><path d="M12 2a10 10 0 0 1 7.38 16.75M16 12l-4-4-4 4M12 16V8M2.5 8.875a10 10 0 0 0-.5 3M2.83 16a10 10 0 0 0 2.43 3.4M4.636 5.235a10 10 0 0 1 .891-.857M8.644 21.42a10 10 0 0 0 7.631-.38"/></g><rect x="36" y="544" width="14" height="14" rx="3.5" fill="#ef7b28"/><g transform="translate(38 546) scale(.4167)" stroke="#000" stroke-opacity=".85" stroke-width="2.300"><path d="M12 2a10 10 0 0 1 7.38 16.75M16 12l-4-4-4 4M12 16V8M2.5 8.875a10 10 0 0 0-.5 3M2.83 16a10 10 0 0 0 2.43 3.4M4.636 5.235a10 10 0 0 1 .891-.857M8.644 21.42a10 10 0 0 0 7.631-.38"/></g><rect x="54" y="544" width="14" height="14" rx="3.5" fill="#ef7b28"/><g transform="translate(56 546) scale(.4167)" stroke="#000" stroke-opacity=".85" stroke-width="2.300"><path d="M12 2a10 10 0 0 1 7.38 16.75M16 12l-4-4-4 4M12 16V8M2.5 8.875a10 10 0 0 0-.5 3M2.83 16a10 10 0 0 0 2.43 3.4M4.636 5.235a10 10 0 0 1 .891-.857M8.644 21.42a10 10 0 0 0 7.631-.38"/></g><rect x="72" y="544" width="14" height="14" rx="3.5" fill="#1f4e16"/><path d="M75.67 551.00l2.08 2.08 4.59-4.58" stroke="#e4efe2" stroke-opacity=".8" stroke-width=".9"/><rect x="90" y="544" width="14" height="14" rx="3.5" fill="#ef7b28"/><g transform="translate(92 546) scale(.4167)" stroke="#000" stroke-opacity=".85" stroke-width="2.300"><path d="M12 2a10 10 0 0 1 7.38 16.75M16 12l-4-4-4 4M12 16V8M2.5 8.875a10 10 0 0 0-.5 3M2.83 16a10 10 0 0 0 2.43 3.4M4.636 5.235a10 10 0 0 1 .891-.857M8.644 21.42a10 10 0 0 0 7.631-.38"/></g><rect x="108" y="544" width="14" height="14" rx="3.5" fill="#1f4e16"/><path d="M111.67 551.00l2.08 2.08 4.59-4.58" stroke="#e4efe2" stroke-opacity=".8" stroke-width=".9"/><rect x="126" y="544" width="14" height="14" rx="3.5" fill="#ef7b28"/><g transform="translate(128 546) scale(.4167)" stroke="#000" stroke-opacity=".85" stroke-width="2.300"><path d="M12 2a10 10 0 0 1 7.38 16.75M16 12l-4-4-4 4M12 16V8M2.5 8.875a10 10 0 0 0-.5 3M2.83 16a10 10 0 0 0 2.43 3.4M4.636 5.235a10 10 0 0 1 .891-.857M8.644 21.42a10 10 0 0 0 7.631-.38"/></g><rect x="144" y="544" width="14" height="14" rx="3.5" fill="#ef7b28"/><g transform="translate(146 546) scale(.4167)" stroke="#000" stroke-opacity=".85" stroke-width="2.300"><path d="M12 2a10 10 0 0 1 7.38 16.75M16 12l-4-4-4 4M12 16V8M2.5 8.875a10 10 0 0 0-.5 3M2.83 16a10 10 0 0 0 2.43 3.4M4.636 5.235a10 10 0 0 1 .891-.857M8.644 21.42a10 10 0 0 0 7.631-.38"/></g><rect x="162" y="544" width="14" height="14" rx="3.5" fill="#ef7b28"/><g transform="translate(164 546) scale(.4167)" stroke="#000" stroke-opacity=".85" stroke-width="2.300"><path d="M12 2a10 10 0 0 1 7.38 16.75M16 12l-4-4-4 4M12 16V8M2.5 8.875a10 10 0 0 0-.5 3M2.83 16a10 10 0 0 0 2.43 3.4M4.636 5.235a10 10 0 0 1 .891-.857M8.644 21.42a10 10 0 0 0 7.631-.38"/></g></svg><div class="abs" style="left:415px;top:58px;width:2px;height:947px;background:#71717a"></div>
<div class="card" style="left:425px;top:58px;width:1282px;height:132px"></div><svg class="abs" style="left:434.5px;top:79.1px" width="20.2" height="20.2" viewBox="0 0 28 28" fill="none" stroke="#e4e4e7" stroke-width="1.9" stroke-linecap="round" stroke-linejoin="round"><path d="M3.2 6.8H18.2"/><circle cx="22.05" cy="6.8" r="3.85"/><path d="M7.1 6.8V18.6a3 3 0 0 0 3 3H14.6"/><circle cx="18.4" cy="21.6" r="3.75"/></svg><div class="abs" style="left:462px;top:73px;font-size:18px;line-height:28px;-webkit-text-stroke:0.5px #fafafa"><span style="letter-spacing:0.400px;">toy_chain_linear_vs_chain_complex</span></div><div class="abs" style="left:773px;top:80px;width:32px;height:16px;border-radius:8px;background:#3b58e0"><div class="abs" style="left:18px;top:1.5px;width:13px;height:13px;border-radius:50%;background:#fff"></div></div><div class="abs" style="left:1552px;top:67px;width:146px;height:40px;border:1px solid #27272a;border-radius:4px"><svg class="abs" style="left:18px;top:9px" width="17" height="20" viewBox="0 0 17 20" fill="none" stroke="#ececee" stroke-width="1.4" stroke-linecap="butt" stroke-linejoin="miter"><path d="M14 9.600V2H1.400V17.300H7.200"/><path d="M3.900 5.600H11.400M3.900 8.500H7.600"/><path d="M14.690 14.210A3.300 3.300 0 1 1 12.790 11.510" stroke-width="1.5"/><path d="M13.300 10.200v1.700h1.700" stroke-width="1"/></svg><div class="abs" style="left:44.5px;top:9px;font-size:14px;line-height:20px;-webkit-text-stroke:0.2px #fafafa"><span style="letter-spacing:0.100px;">Reparse Dag</span></div></div><div class="lbl" style="left:433.5px;top:122px"><span style="letter-spacing:0.177px;">Schedule</span></div><div class="lbl" style="left:601.5px;top:122px"><span style="letter-spacing:0.032px;">Latest Run</span></div><div class="lbl" style="left:905.3px;top:122px"><span style="letter-spacing:0.004px;">Next Run</span></div><div class="lbl" style="left:1071.4px;top:122px"><span style="letter-spacing:0.139px;">Owner</span></div><div class="lbl" style="left:1232.4px;top:122px"><span style="letter-spacing:0.025px;">Tags</span></div><div class="lbl" style="left:1586.8px;top:122px"><span style="letter-spacing:0.144px;">Latest Dag Version</span></div><div class="abs" style="left:601.5px;top:150px;font-size:16px;line-height:24px"><span style="letter-spacing:0.383px;">2025-04-14, 17:59:04</span></div><div class="abs" style="left:771.0px;top:149.0px;width:22px;height:22px;border-radius:50%;background:#c9382a"><svg width="13.5" height="13.5" viewBox="0 0 24 24" fill="none" stroke="#fff" stroke-width="2.4" stroke-linecap="round" stroke-linejoin="round" style="position:absolute;left:4.2px;top:4.2px"><line x1="18" y1="6" x2="6" y2="18"/><line x1="6" y1="6" x2="18" y2="18"/></svg></div><div class="abs" style="left:1071.4px;top:150px;font-size:16px;line-height:24px"><span style="letter-spacing:0.244px;">airflow</span></div><svg width="16" height="16" viewBox="0 0 24 24" fill="none" stroke="#fafafa" stroke-width="1.9" stroke-linecap="round" stroke-linejoin="round" style="position:absolute;left:1232px;top:152px"><path d="M20.59 13.41l-7.17 7.17a2 2 0 0 1-2.83 0L2 12V2h10l8.59 8.59a2 2 0 0 1 0 2.82z"/><line x1="7" y1="7" x2="7.01" y2="7"/></svg><div class="abs" style="left:1252.4px;top:150px;font-size:14px;line-height:20px"><span style="letter-spacing:0.255px;">chain_linear(), core, toy, , +2 more</span></div><div class="abs" style="left:1586.8px;top:150px;font-size:16px;line-height:24px"><span>v1</span></div><div class="abs" style="left:417px;top:234px;width:1290px;height:1px;background:#27272a"></div><div class="abs" style="left:417px;top:233px;width:104px;height:3px;background:#6395f1"></div><div class="tab" style="left:432.8px;color:#fafafa"><span style="letter-spacing:0.178px;">Overview</span></div><div class="tab" style="left:537.4px"><span style="letter-spacing:-0.500px;">Runs</span></div><div class="tab" style="left:608.6px"><span style="letter-spacing:-0.072px;">Tasks</span></div><div class="tab" style="left:684.9px"><span style="letter-spacing:-0.174px;">Events</span></div><div class="tab" style="left:769.2px"><span style="letter-spacing:0.067px;">Code</span></div><div class="tab" style="left:841.6px"><span style="letter-spacing:0.172px;">Details</span></div>
<svg width="17" height="17" viewBox="0 0 24 24" fill="none" stroke="#fafafa" stroke-width="1.9" stroke-linecap="round" stroke-linejoin="round" style="position:absolute;left:440.5px;top:269.5px"><rect x="3" y="4" width="18" height="18" rx="2" ry="2"/><line x1="16" y1="2" x2="16" y2="6"/><line x1="8" y1="2" x2="8" y2="6"/><line x1="3" y1="10" x2="21" y2="10"/></svg><div class="abs" style="left:465px;top:259px;width:200px;height:40px;border:1px solid #27272a;border-radius:4px"><div class="abs" style="left:11.7px;top:9px;font-size:14px;line-height:20px"><span style="letter-spacing:0.238px;">Last 24 hours</span></div><svg width="16" height="16" viewBox="0 0 24 24" fill="none" stroke="#a1a1aa" stroke-width="1.8" stroke-linecap="round" stroke-linejoin="round" style="position:absolute;left:171px;top:11.5px"><polyline points="6 9 12 15 18 9"/></svg></div><div class="abs" style="left:672.8px;top:267.6px;font-size:16px;line-height:24px"><span style="letter-spacing:0.406px;">2025-04-13, 17:59:45 - 2025-04-14, 17:59:45</span></div><div class="abs" style="left:441px;top:307px;width:350px;height:51px;border:1px solid #27272a;border-radius:4px"><div class="abs" style="left:12px;top:15.5px;width:19.4px;height:19.4px;border-radius:50%;background:#c9382a;font-size:12px;line-height:19.4px;text-align:center;color:#fff">8</div><div class="abs" style="left:39.5px;top:14.5px;font-size:14px;line-height:20px;font-weight:bold"><span style="letter-spacing:0.080px;">Failed Tasks</span></div><svg class="abs" style="left:131.9px;top:14px" width="200" height="22" viewBox="0 0 200 22" fill="none"><path d="M0 20.900H176C180 20.900 182 20 185 17.300L198 4.800V20.900Z" fill="#4c1a17" stroke="none"/><path d="M0 20.900H176C180 20.900 182 20 185 17.300L198 4.800" stroke="#ee6f66" stroke-width="1.900"/></svg></div><div class="abs" style="left:799px;top:307px;width:350px;height:51px;border:1px solid #27272a;border-radius:4px"><div class="abs" style="left:12px;top:15.5px;width:19.4px;height:19.4px;border-radius:50%;background:#c9382a;font-size:12px;line-height:19.4px;text-align:center;color:#fff">8</div><div class="abs" style="left:39.5px;top:14.5px;font-size:14px;line-height:20px;font-weight:bold"><span style="letter-spacing:-0.056px;">Failed Runs</span></div><svg class="abs" style="left:126.8px;top:14px" width="200" height="22" viewBox="0 0 200 22" fill="none"><path d="M0 20.900H176C180 20.900 182 20 185 17.300L198 4.800V20.900Z" fill="#4c1a17" stroke="none"/><path d="M0 20.900H176C180 20.900 182 20 185 17.300L198 4.800" stroke="#ee6f66" stroke-width="1.900"/></svg></div><div class="abs" style="left:441px;top:359px;width:350px;height:211px;border:1px solid #27272a;border-radius:4px"></div><div class="abs" style="left:557.8px;top:367px;font-size:14px;line-height:20px;font-weight:bold"><span style="letter-spacing:-0.112px;">Last 14 Dag Runs</span></div><svg class="abs" style="left:441px;top:359px" width="350" height="210" viewBox="0 0 350 210" font-family="Liberation Sans, sans-serif"><path d="M118.4 61.8H340.7" stroke="#161616" stroke-width="1"/><path d="M118.4 93.0H340.7" stroke="#161616" stroke-width="1"/><path d="M118.4 124.3H340.7" stroke="#161616" stroke-width="1"/><rect x="120.55" y="64.2" width="11.6" height="60.1" fill="#c93829"/><rect x="120.55" y="120.3" width="11.6" height="4.0" fill="#7a7a7a"/><rect x="136.43" y="57.4" width="11.6" height="66.9" fill="#2d771b"/><rect x="136.43" y="116.8" width="11.6" height="7.5" fill="#7a7a7a"/><rect x="152.31" y="66.1" width="11.6" height="58.2" fill="#2d771b"/><rect x="152.31" y="118.8" width="11.6" height="5.5" fill="#7a7a7a"/><rect x="168.19" y="64.4" width="11.6" height="59.9" fill="#2d771b"/><rect x="184.07" y="79.0" width="11.6" height="45.3" fill="#2d771b"/><rect x="184.07" y="117.3" width="11.6" height="7.0" fill="#7a7a7a"/><rect x="199.95" y="94.7" width="11.6" height="29.6" fill="#c93829"/><rect x="199.95" y="117.3" width="11.6" height="7.0" fill="#7a7a7a"/><rect x="215.83" y="74.1" width="11.6" height="50.2" fill="#c93829"/><rect x="215.83" y="121.3" width="11.6" height="3.0" fill="#7a7a7a"/><rect x="231.71" y="78.0" width="11.6" height="46.3" fill="#c93829"/><rect x="247.59" y="57.8" width="11.6" height="66.5" fill="#2d771b"/><rect x="263.47" y="79.0" width="11.6" height="45.3" fill="#c93829"/><rect x="263.47" y="117.5" width="11.6" height="6.8" fill="#7a7a7a"/><rect x="279.35" y="54.6" width="11.6" height="69.7" fill="#2d771b"/><rect x="279.35" y="121.8" width="11.6" height="2.5" fill="#7a7a7a"/><rect x="295.23" y="69.3" width="11.6" height="55.0" fill="#c93829"/><rect x="311.11" y="72.0" width="11.6" height="52.3" fill="#c93829"/><rect x="311.11" y="118.8" width="11.6" height="5.5" fill="#7a7a7a"/><rect x="326.99" y="72.7" width="11.6" height="51.6" fill="#c93829"/><rect x="326.99" y="118.8" width="11.6" height="5.5" fill="#7a7a7a"/><path d="M118.4 70.4H340.7" stroke="#2d771b" stroke-width="1"/><path d="M118.4 120.7H340.7" stroke="#808080" stroke-width="1"/><rect x="300.0" y="57.5" width="35" height="25.400" rx="6" fill="#000" fill-opacity=".78"/><text x="316.8" y="74.7" font-size="12" font-weight="bold" fill="#fff" text-anchor="middle">6.90</text><rect x="300.0" y="92.2" width="35" height="25.400" rx="6" fill="#000" fill-opacity=".78"/><text x="316.8" y="109.4" font-size="12" font-weight="bold" fill="#fff" text-anchor="middle">0.47</text><text x="107.3" y="66.1" font-size="12" fill="#666" text-anchor="end">8</text><text x="107.3" y="97.3" font-size="12" fill="#666" text-anchor="end">4</text><text x="107.3" y="128.6" font-size="12" fill="#666" text-anchor="end">0</text><text transform="translate(91.3 96.3) rotate(-90)" font-size="12" fill="#666" text-anchor="middle">Duration (seconds)</text><text transform="translate(126.8 145.3) rotate(-14.2)" font-size="12" letter-spacing=".08" fill="#666" text-anchor="end">2025-04-14, 01:58:40</text><text transform="translate(206.2 145.3) rotate(-14.2)" font-size="12" letter-spacing=".08" fill="#666" text-anchor="end">2025-04-14, 01:58:49</text><text transform="translate(285.6 145.3) rotate(-14.2)" font-size="12" letter-spacing=".08" fill="#666" text-anchor="end">2025-04-14, 01:58:58</text><text x="341.0" y="195.0" font-size="12" fill="#666" text-anchor="end">Run After</text></svg>
<div class="abs" style="left:440.6px;top:577px;font-size:16px;line-height:24px;font-weight:bold"><span style="letter-spacing:-0.251px;">Recent Failed Task Logs</span></div><div class="abs" style="left:1618px;top:570px;width:65px;height:36px;border:1px solid #27272a;border-radius:4px"><div class="abs" style="left:14.6px;top:7px;font-size:14px;line-height:20px;-webkit-text-stroke:0.1px #fafafa"><span style="letter-spacing:0.299px;">Wrap</span></div></div><div class="lc" style="top:618.0px;height:138.0px"><div class="abs" style="left:8.0px;top:6.0px;width:22px;height:22px;border-radius:50%;background:#c9382a"><svg width="13.5" height="13.5" viewBox="0 0 24 24" fill="none" stroke="#fff" stroke-width="2.4" stroke-linecap="round" stroke-linejoin="round" style="position:absolute;left:4.2px;top:4.2px"><line x1="18" y1="6" x2="6" y2="18"/><line x1="6" y1="6" x2="18" y2="18"/></svg></div><div class="abs" style="left:33.9px;top:6.5px;font-size:16px;line-height:24px"><span style="letter-spacing:0.180px;">empty_1 2025-04-14, 17:59:04</span></div><svg class="abs" style="left:1118px;top:11px" width="14" height="14" viewBox="0 0 24 24" fill="#a9c6fb"><path d="M17.65 6.35A7.958 7.958 0 0 0 12 4c-4.420 0-7.990 3.580-7.990 8s3.570 8 7.990 8c3.730 0 6.840-2.550 7.730-6h-2.080A5.990 5.990 0 0 1 12 18c-3.310 0-6-2.690-6-6s2.690-6 6-6c1.660 0 3.140.690 4.220 1.780L13 11h7V4l-2.350 2.350z"/></svg><div class="abs" style="left:1146.8px;top:8.500px;font-size:14px;line-height:20px;color:#a9c6fb"><span style="letter-spacing:0.273px;">View full logs</span></div><div class="code"><div class="mono" style="left:29.1px;top:11.5px;color:#d4d4d8">4</div><div class="mono" style="left:51.1px;top:11.5px">[2025-04-14, 17:59:09] <span class="e">ERROR</span> - Task failed with exception: <span class="b">source="task"</span></div><div class="mono" style="left:245.0px;top:29.5px"><span style="font-size:13px">&#9662;</span></div><div class="mono" style="left:259.2px;top:29.5px"><span class="b">Exception: Random failure</span></div><div class="mono" style="left:244.7px;top:47.5px">File <span class="b">"/opt/airflow/task-sdk/src/airflow/sdk/execution_time/task_runner.py"</span>, line 809 in run</div><div class="mono" style="left:244.7px;top:65.5px">File <span class="b">"/opt/airflow/task-sdk/src/airflow/sdk/execution_time/task_runner.py"</span>, line 1072 in _execute_task</div><div class="mono" style="left:244.7px;top:83.5px">File <span class="b">"/opt/airflow/task-sdk/src/airflow/sdk/bases/operator.py"</span>, line 408 in wrapper</div></div></div><div class="lc" style="top:768.0px;height:138.0px"><div class="abs" style="left:8.0px;top:6.0px;width:22px;height:22px;border-radius:50%;background:#c9382a"><svg width="13.5" height="13.5" viewBox="0 0 24 24" fill="none" stroke="#fff" stroke-width="2.4" stroke-linecap="round" stroke-linejoin="round" style="position:absolute;left:4.2px;top:4.2px"><line x1="18" y1="6" x2="6" y2="18"/><line x1="6" y1="6" x2="18" y2="18"/></svg></div><div class="abs" style="left:33.9px;top:6.5px;font-size:16px;line-height:24px"><span style="letter-spacing:0.180px;">empty_1 2025-04-14, 17:59:03</span></div><svg class="abs" style="left:1118px;top:11px" width="14" height="14" viewBox="0 0 24 24" fill="#a9c6fb"><path d="M17.65 6.35A7.958 7.958 0 0 0 12 4c-4.420 0-7.990 3.580-7.990 8s3.570 8 7.990 8c3.730 0 6.840-2.550 7.730-6h-2.080A5.990 5.990 0 0 1 12 18c-3.310 0-6-2.690-6-6s2.690-6 6-6c1.660 0 3.140.690 4.220 1.780L13 11h7V4l-2.350 2.350z"/></svg><div class="abs" style="left:1146.8px;top:8.500px;font-size:14px;line-height:20px;color:#a9c6fb"><span style="letter-spacing:0.273px;">View full logs</span></div><div class="code"><div class="mono" style="left:29.1px;top:11.5px;color:#d4d4d8">4</div><div class="mono" style="left:51.1px;top:11.5px">[2025-04-14, 17:59:06] <span class="e">ERROR</span> - Task failed with exception: <span class="b">source="task"</span></div><div class="mono" style="left:245.0px;top:29.5px"><span style="font-size:13px">&#9662;</span></div><div class="mono" style="left:259.2px;top:29.5px"><span class="b">Exception: Random failure</span></div><div class="mono" style="left:244.7px;top:47.5px">File <span class="b">"/opt/airflow/task-sdk/src/airflow/sdk/execution_time/task_runner.py"</span>, line 809 in run</div><div class="mono" style="left:244.7px;top:65.5px">File <span class="b">"/opt/airflow/task-sdk/src/airflow/sdk/execution_time/task_runner.py"</span>, line 1072 in _execute_task</div><div class="mono" style="left:244.7px;top:83.5px">File <span class="b">"/opt/airflow/task-sdk/src/airflow/sdk/bases/operator.py"</span>, line 408 in wrapper</div></div></div><div class="lc" style="top:918.0px;height:138.0px"><div class="abs" style="left:8.0px;top:6.0px;width:22px;height:22px;border-radius:50%;background:#c9382a"><svg width="13.5" height="13.5" viewBox="0 0 24 24" fill="none" stroke="#fff" stroke-width="2.4" stroke-linecap="round" stroke-linejoin="round" style="position:absolute;left:4.2px;top:4.2px"><line x1="18" y1="6" x2="6" y2="18"/><line x1="6" y1="6" x2="18" y2="18"/></svg></div><div class="abs" style="left:33.9px;top:6.5px;font-size:16px;line-height:24px"><span style="letter-spacing:0.099px;">empty_1 2025-04-14, 17:59:01</span></div><svg class="abs" style="left:1118px;top:11px" width="14" height="14" viewBox="0 0 24 24" fill="#a9c6fb"><path d="M17.65 6.35A7.958 7.958 0 0 0 12 4c-4.420 0-7.990 3.580-7.990 8s3.570 8 7.990 8c3.730 0 6.840-2.550 7.730-6h-2.080A5.990 5.990 0 0 1 12 18c-3.310 0-6-2.690-6-6s2.690-6 6-6c1.660 0 3.140.690 4.220 1.780L13 11h7V4l-2.350 2.350z"/></svg><div class="abs" style="left:1146.8px;top:8.500px;font-size:14px;line-height:20px;color:#a9c6fb"><span style="letter-spacing:0.273px;">View full logs</span></div><div class="code"><div class="mono" style="left:29.1px;top:11.5px;color:#d4d4d8">4</div><div class="mono" style="left:51.1px;top:11.5px">[2025-04-14, 17:59:05] <span class="e">ERROR</span> - Task failed with exception: <span class="b">source="task"</span></div><div class="mono" style="left:245.0px;top:29.5px"><span style="font-size:13px">&#9662;</span></div><div class="mono" style="left:259.2px;top:29.5px"><span class="b">Exception: Random failure</span></div><div class="mono" style="left:244.7px;top:47.5px">File <span class="b">"/opt/airflow/task-sdk/src/airflow/sdk/execution_time/task_runner.py"</span>, line 809 in run</div><div class="mono" style="left:244.7px;top:65.5px">File <span class="b">"/opt/airflow/task-sdk/src/airflow/sdk/execution_time/task_runner.py"</span>, line 1072 in _execute_task</div><div class="mono" style="left:244.7px;top:83.5px">File <span class="b">"/opt/airflow/task-sdk/src/airflow/sdk/bases/operator.py"</span>, line 408 in wrapper</div></div></div><div class="abs" style="left:80px;top:1005px;width:1634px;height:9px;background:#0d0d0d"></div>
</body>
</html>
